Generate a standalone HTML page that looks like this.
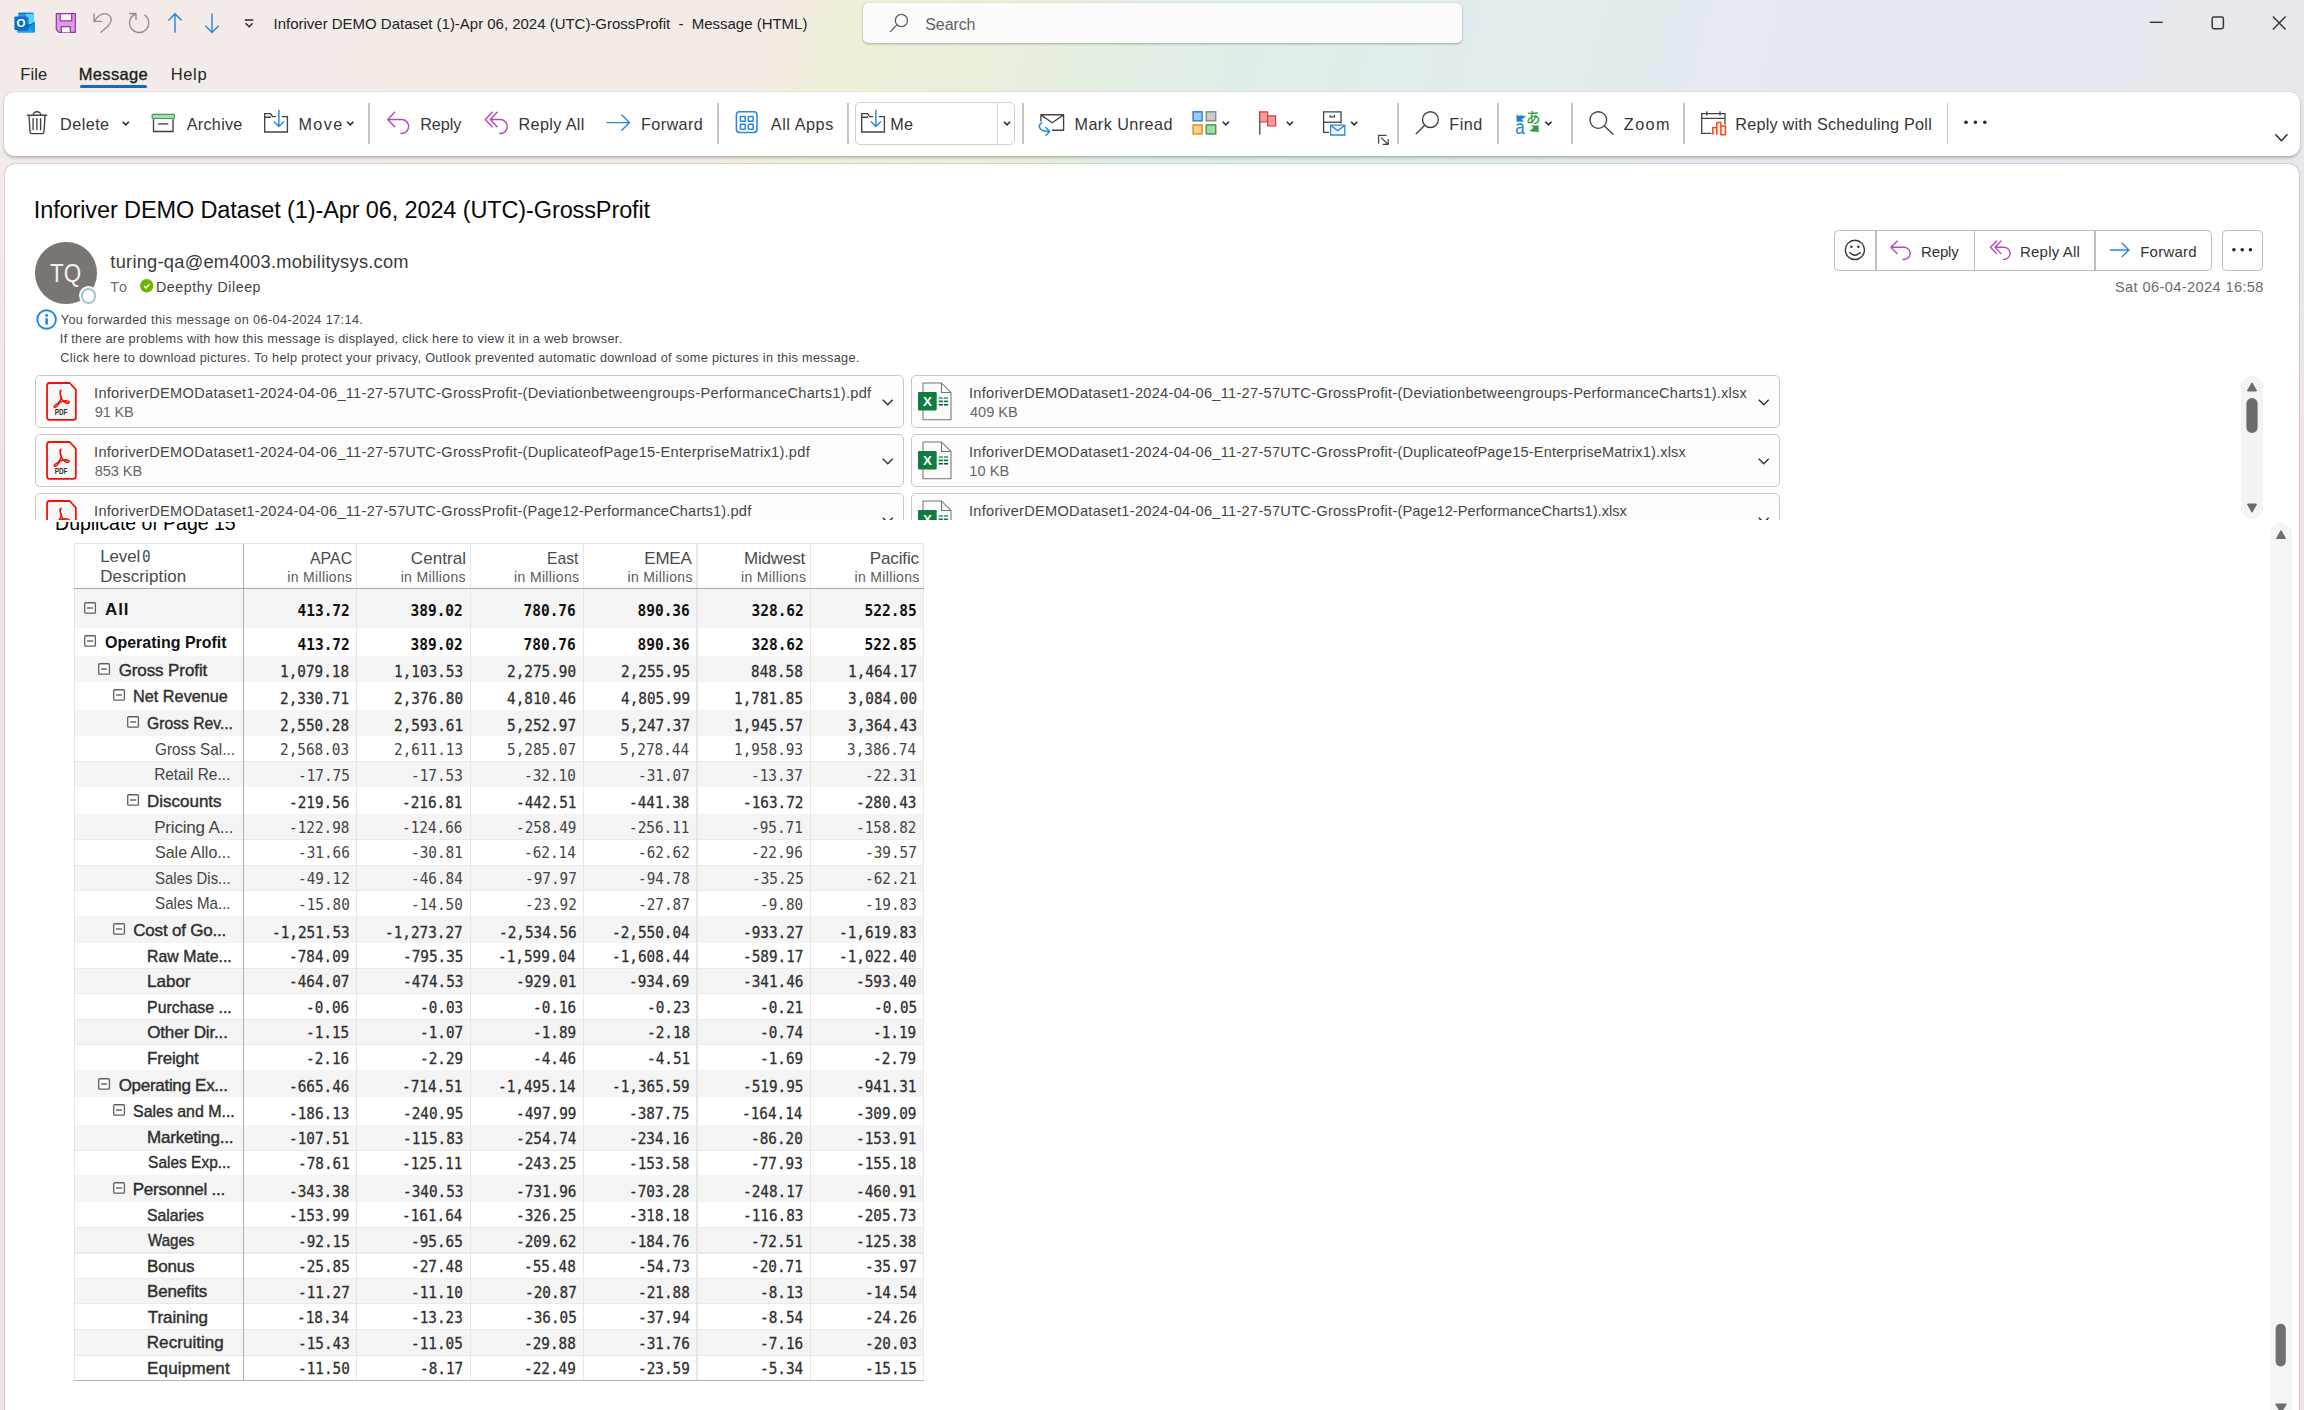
<!DOCTYPE html>
<html lang="en"><head><meta charset="utf-8"><title>Inforiver DEMO Dataset (1)-Apr 06, 2024 (UTC)-GrossProfit - Message (HTML)</title>
<style>
*{box-sizing:border-box;margin:0;padding:0}
html,body{width:2304px;height:1410px;overflow:hidden}
body{position:relative;font-family:"Liberation Sans",sans-serif;color:#242424;
background:linear-gradient(#f3ebe7 0,#f3ebe7 250px,#f0e4e9 450px);}
#topbg{left:0;top:0;width:2304px;height:175px;background:linear-gradient(105deg,#f3ebe7 0%,#f3ebe6 32.5%,#f1efd8 36.3%,#e8f0de 43.1%,#e0eee8 53.7%,#e2ecee 62.3%,#e5eaf0 77%,#e7e8ee 100%)}
div,svg,span.t{position:absolute}
span.t{white-space:nowrap;line-height:1}
svg{overflow:visible}
.sep{width:1.5px;background:#c8c8c8}
</style></head>
<body>
<div id="topbg"></div>
<svg style="left:0;top:0" width="270" height="46" viewBox="0 0 270 46"><path d="M18.2 13.6a0.8 0.8 0 0 1 .8-.8H33.1a0.8 0.8 0 0 1 .8.8V24H18.2Z" fill="#1e9be8"/><path d="M26 13H33.9V24H26Z" fill="#50d9ff"/><path d="M18.6 12.8H33.5V13.7H18.6Z" fill="#0b5cb0"/><path d="M17.2 24H34.9V31.9a0.8 0.8 0 0 1-.8.8H18a0.8 0.8 0 0 1-.8-.8Z" fill="#1ba4f0"/><path d="M34.9 22.2V32.4L27.6 26.4Z" fill="#1490df"/><path d="M34.9 22.2L27.4 26.4" stroke="#123b7a" stroke-width="0.7"/><path d="M26.8 17.5H28.8V29.5L26.8 31H17.5V29Z" fill="#0b4f8f" opacity=".55"/><rect x="14.4" y="16.4" width="12.8" height="13.7" rx="1.1" fill="#0a6cd0"/><text x="20.95" y="27.05" text-anchor="middle" font-family="Liberation Sans,sans-serif" font-weight="700" font-size="11.6" fill="#fff">O</text><path d="M56.3 13.7H75.3V32.3H59L56.3 29.6Z" fill="#da9fe2" stroke="#9a2eae" stroke-width="1.2" stroke-linejoin="round"/><path d="M60.2 13.7H71.7V20.8H60.2Z" fill="#fbfbfb" stroke="#9a2eae" stroke-width="1.2"/><path d="M61.3 32.3V26.6H70.3V32.3" fill="#fbfbfb" stroke="#9a2eae" stroke-width="1.2"/><g fill="none" stroke="#8f8c8a" stroke-width="1.35"><path d="M94 13.5V21.3H102.1M94.3 21C97.5 16.5 100.5 13.6 104.5 13.6C108.5 13.6 111.3 16.8 111.2 20C111.1 23 109.6 24.6 107.6 26.4L100.6 32.4"/><path d="M129.1 13.5H136V20.1M135.6 14A9.6 9.6 0 1 0 144.4 14.9"/></g><g fill="none" stroke="#2b88d8" stroke-width="1.45"><path d="M175 13.8V32.8M168.4 20.6L175 13.9L181.7 20.6"/><path d="M212 13.4V32.4M205.4 25.7L212 32.4L218.7 25.7"/></g><path d="M244.8 20H253.3M245.6 23.3L249.1 26.8L252.6 23.3" fill="none" stroke="#2b2b2b" stroke-width="1.4"/></svg>
<span class="t" style="top:16.00px;font-size:15px;left:273.62px;letter-spacing:-0.018px;white-space:pre;">Inforiver DEMO Dataset (1)-Apr 06, 2024 (UTC)-GrossProfit  -  Message (HTML)</span>
<div style="left:863px;top:3px;width:599px;height:40px;background:#fbfbfb;border-radius:5px;box-shadow:0 1px 2.5px rgba(0,0,0,.28),0 0 1px rgba(0,0,0,.18);"></div>
<svg style="left:888px;top:12px;" width="22" height="22" viewBox="0 0 22 22"><circle cx="13.400" cy="8.500" r="6.100" fill="none" stroke="#606060" stroke-width="1.35"/><path d="M9 12.900 L2.500 19.500" stroke="#606060" stroke-width="1.35" stroke-linecap="round"/></svg>
<span class="t" style="top:17.00px;font-size:16px;left:925.28px;letter-spacing:-0.089px;color:#616161;">Search</span>
<svg style="left:2140px;top:8px;" width="160" height="30" viewBox="0 0 160 30"><path d="M9.8 14.3h12.9" stroke="#333" stroke-width="1.4"/><rect x="72.2" y="9.1" width="11.2" height="11.7" rx="1.7" fill="none" stroke="#383838" stroke-width="1.5"/><path d="M132.9 8.6l12.7 12.9M145.6 8.6l-12.7 12.9" stroke="#333" stroke-width="1.4"/></svg>
<span class="t" style="top:66.00px;font-size:16.5px;left:20.15px;letter-spacing:0.166px;">File</span>
<span class="t" style="top:66.00px;font-size:16.5px;left:78.65px;letter-spacing:0.356px;color:#1b1b1b;-webkit-text-stroke:0.35px #1b1b1b;">Message</span>
<span class="t" style="top:66.00px;font-size:16.5px;left:170.65px;letter-spacing:0.696px;">Help</span>
<div style="left:80px;top:84.5px;width:67px;height:3px;background:#0f6cbd;border-radius:1.5px;"></div>
<div style="left:4px;top:92px;width:2296px;height:63.5px;background:#fff;border-radius:11px;box-shadow:0 1.5px 3px rgba(0,0,0,.22),0 0 1.5px rgba(0,0,0,.12);"></div>
<span class="t" style="top:116.00px;font-size:16.2px;left:60.07px;letter-spacing:0.445px;color:#363636;">Delete</span>
<span class="t" style="top:116.00px;font-size:16.2px;left:186.77px;letter-spacing:0.272px;color:#363636;">Archive</span>
<span class="t" style="top:116.00px;font-size:16.2px;left:298.47px;letter-spacing:1.411px;color:#363636;">Move</span>
<span class="t" style="top:116.00px;font-size:16.2px;left:420.27px;letter-spacing:-0.091px;color:#363636;">Reply</span>
<span class="t" style="top:116.00px;font-size:16.2px;left:518.47px;letter-spacing:0.372px;color:#363636;">Reply All</span>
<span class="t" style="top:116.00px;font-size:16.2px;left:640.97px;letter-spacing:0.393px;color:#363636;">Forward</span>
<span class="t" style="top:116.00px;font-size:16.2px;left:770.77px;letter-spacing:0.569px;color:#363636;">All Apps</span>
<span class="t" style="top:116.00px;font-size:16.2px;left:890.27px;letter-spacing:0.139px;color:#363636;">Me</span>
<span class="t" style="top:116.00px;font-size:16.2px;left:1074.47px;letter-spacing:0.443px;color:#363636;">Mark Unread</span>
<span class="t" style="top:116.00px;font-size:16.2px;left:1449.37px;letter-spacing:0.485px;color:#363636;">Find</span>
<span class="t" style="top:116.00px;font-size:16.2px;left:1623.80px;letter-spacing:1.449px;color:#363636;">Zoom</span>
<span class="t" style="top:116.00px;font-size:16.2px;left:1735.27px;letter-spacing:0.228px;color:#363636;">Reply with Scheduling Poll</span>
<div style="left:368.25px;top:103.2px;width:1.5px;height:40.6px;background:#c6c6c6;"></div>
<div style="left:717.45px;top:103.2px;width:1.5px;height:40.6px;background:#c6c6c6;"></div>
<div style="left:847.15px;top:103.2px;width:1.5px;height:40.6px;background:#c6c6c6;"></div>
<div style="left:1022.25px;top:103.2px;width:1.5px;height:40.6px;background:#c6c6c6;"></div>
<div style="left:1397.15px;top:103.2px;width:1.5px;height:40.6px;background:#c6c6c6;"></div>
<div style="left:1497.05px;top:103.2px;width:1.5px;height:40.6px;background:#c6c6c6;"></div>
<div style="left:1571.25px;top:103.2px;width:1.5px;height:40.6px;background:#c6c6c6;"></div>
<div style="left:1683.25px;top:103.2px;width:1.5px;height:40.6px;background:#c6c6c6;"></div>
<div style="left:1946.55px;top:103.2px;width:1.5px;height:40.6px;background:#c6c6c6;"></div>
<div style="left:855.3px;top:101.5px;width:159.7px;height:43px;border:1.2px solid #d1d1d1;border-radius:5px;"></div>
<div style="left:997px;top:102px;width:1.2px;height:42px;background:#d9d9d9;"></div>
<svg style="left:0;top:0" width="2304" height="160" viewBox="0 0 2304 160"><g fill="none" stroke="#424242" stroke-width="1.35" stroke-linecap="round" stroke-linejoin="round"><path d="M27.4 115.2H46.6M33.2 115 a3.8 3.3 0 0 1 7.6 0M29 115.4l1 16.3a2 2 0 0 0 2 1.9h10a2 2 0 0 0 2-1.9l1-16.3M33.1 118.6v11M36.9 118.6v11M40.6 118.6v11"/></g><path d="M122.65 121.77 l3.1 3.0 l3.1 -3.0" fill="none" stroke="#2b2b2b" stroke-width="1.6"/><rect x="152.1" y="114.4" width="22.4" height="4.2" rx="0.8" fill="#a9dcae" stroke="#3f9f52" stroke-width="1.2"/><path d="M153.5 119.2V131.5H173V119.2" fill="#fafafa" stroke="#424242" stroke-width="1.35"/><path d="M158.2 123.9H168.2" stroke="#424242" stroke-width="1.35"/><g transform="translate(0 0)" fill="none" stroke-width="1.35"><path d="M276 116.6H272.6L270.6 113.6H264.7V132H287.4V116.6H281.8M264.7 117.2H271" stroke="#424242"/><path d="M278.9 109.8V126.2M273.9 121.4l5 5 5-5" stroke="#2b88d8" stroke-width="1.45"/></g><path d="M347.15 121.77 l3.1 3.0 l3.1 -3.0" fill="none" stroke="#2b2b2b" stroke-width="1.6"/><g transform="translate(597 0)" fill="none" stroke-width="1.35"><path d="M276 116.6H272.6L270.6 113.6H264.7V132H287.4V116.6H281.8M264.7 117.2H271" stroke="#424242"/><path d="M278.9 109.8V126.2M273.9 121.4l5 5 5-5" stroke="#2b88d8" stroke-width="1.45"/></g><path d="M1003.95 121.77 l3.1 3.0 l3.1 -3.0" fill="none" stroke="#2b2b2b" stroke-width="1.6"/><path transform="translate(387 111.5) scale(1)" d="M7.6 0.7L0.8 8L7.6 15.3M1 8H15.2A7 7 0 0 1 14 22" fill="none" stroke="#b44ac0" stroke-width="1.45" stroke-linecap="round" stroke-linejoin="round"/><path transform="translate(484.5 111.5)" d="M7.6 0.7L0.8 8L7.6 15.3M12.6 0.7L5.8 8L12.6 15.3M6 8H16.3A7 7 0 0 1 15.2 22" fill="none" stroke="#b44ac0" stroke-width="1.45" stroke-linecap="round" stroke-linejoin="round"/><path d="M607 122.6H629.3M621.8 114.9l7.7 7.7-7.7 7.7" fill="none" stroke="#2b88d8" stroke-width="1.45" stroke-linecap="round" stroke-linejoin="round"/><g fill="none" stroke="#2b88d8" stroke-width="1.55"><rect x="736.4" y="111.8" width="20.6" height="20.6" rx="3.2"/><rect x="740.4" y="116.4" width="4.9" height="4.9" rx="0.6"/><rect x="748.3" y="116.4" width="4.9" height="4.9" rx="0.6"/><rect x="740.4" y="124.3" width="4.9" height="4.9" rx="0.6"/><rect x="748.3" y="124.3" width="4.9" height="4.9" rx="0.6"/></g><path d="M1040.9 121.5V114.7H1063.6V130.2H1052M1040.9 114.9L1052.2 122.7L1063.6 114.9" fill="none" stroke="#424242" stroke-width="1.35" stroke-linejoin="round"/><path d="M1041.8 122.6C1037.5 125.5 1038.5 131.6 1049.2 131.5M1045.8 127.6l3.9 3.9-3.9 3.9" fill="none" stroke="#2b88d8" stroke-width="1.45" stroke-linecap="round" stroke-linejoin="round"/><rect x="1193.1" y="111.8" width="9" height="9" fill="#a0cbf0" stroke="#2f7fd3" stroke-width="1.45"/><rect x="1206.3" y="111.8" width="9.400" height="9" fill="#cbcbcb" stroke="#8b8b8b" stroke-width="1.45"/><rect x="1193.1" y="124.9" width="9" height="9" fill="#fbd58e" stroke="#ea8a13" stroke-width="1.45"/><rect x="1206.3" y="124.9" width="9.400" height="9" fill="#a5daa8" stroke="#3a9c47" stroke-width="1.45"/><path d="M1222.75 121.77 l3.1 3.0 l3.1 -3.0" fill="none" stroke="#2b2b2b" stroke-width="1.6"/><path d="M1259.8 111.4V134.4" stroke="#424242" stroke-width="1.3"/><path d="M1259.8 111.9H1267.6V122H1259.8Z" fill="#f59da1" stroke="#d9383c" stroke-width="1.2"/><path d="M1267.6 115.9H1275.6V126H1267.6Z" fill="#f59da1" stroke="#d9383c" stroke-width="1.2"/><path d="M1286.75 121.77 l3.1 3.0 l3.1 -3.0" fill="none" stroke="#2b2b2b" stroke-width="1.6"/><path d="M1329 132.4H1323.6V111.9H1341V123.5" fill="none" stroke="#424242" stroke-width="1.3"/><path d="M1323.6 122.2H1341" stroke="#424242" stroke-width="1.3"/><path d="M1330 114.9v1.9h4.600v-1.9" fill="none" stroke="#424242" stroke-width="1.15"/><path d="M1330.6 125.2H1344.8V135H1330.6Z" fill="#f3f8fd" stroke="#2b88d8" stroke-width="1.3"/><path d="M1330.6 125.4L1337.7 130.6L1344.8 125.4" fill="none" stroke="#2b88d8" stroke-width="1.3"/><path d="M1351.05 121.77 l3.1 3.0 l3.1 -3.0" fill="none" stroke="#2b2b2b" stroke-width="1.6"/><path d="M1378.6 143.4V135.3H1386.6M1381 137.6L1388 144.3M1388.2 139V144.4H1382.8" fill="none" stroke="#424242" stroke-width="1.2"/><circle cx="1430.4" cy="119.6" r="7.9" fill="none" stroke="#424242" stroke-width="1.35"/><path d="M1424.7 125.3L1416.2 133.8" stroke="#424242" stroke-width="1.35" stroke-linecap="round"/><text x="1515.3" y="133.5" font-family="Liberation Sans,sans-serif" font-size="19.5" textLength="9.5" lengthAdjust="spacingAndGlyphs" fill="#1e86d0">a</text><text x="1526" y="123.3" font-family="Noto Sans CJK JP,IPAGothic,sans-serif" font-size="14.5" font-weight="500" fill="#37a04c">あ</text><path d="M1516.5 114.4L1518.6 115.7L1521 115.3L1526.2 116.2L1521.8 119.4L1524 121.7H1516.5Z" fill="#1e86d0"/><path d="M1538.6 132.7L1536.4 131.4L1534 131.8L1529.2 130.9L1533.4 127.7L1531.3 125.4H1538.6Z" fill="#2f9c44"/><path d="M1545.35 121.77 l3.1 3.0 l3.1 -3.0" fill="none" stroke="#2b2b2b" stroke-width="1.6"/><circle cx="1598.3" cy="120" r="8.3" fill="none" stroke="#424242" stroke-width="1.35"/><path d="M1604.3 126L1613 134.2" stroke="#424242" stroke-width="1.35" stroke-linecap="round"/><path d="M1711.4 133.4H1701.7V113.6H1725V124.6M1701.7 118.4H1725M1706.8 111.2V115.4M1720 111.2V115.4" fill="none" stroke="#424242" stroke-width="1.3"/><path d="M1712.8 134.8V127.6H1716.8V134.8M1716.8 134.8V122.6H1720.9V134.8M1720.9 134.8V126H1725.4V134.8Z" fill="#fdece6" stroke="#e8501d" stroke-width="1.5" stroke-linejoin="round"/><circle cx="1966" cy="122.2" r="1.75" fill="#222"/><circle cx="1975.4" cy="122.2" r="1.75" fill="#222"/><circle cx="1984.8" cy="122.2" r="1.75" fill="#222"/><path d="M2275.800 134.800l5.600 5.900 5.600-5.900" fill="none" stroke="#2a2a2a" stroke-width="1.5" stroke-linecap="round" stroke-linejoin="round"/></svg>
<div style="left:2285px;top:170px;width:19px;height:1240px;background:linear-gradient(#e7e7ee 0,#e7e7ee 90px,#efe4ea 250px);"></div>
<div style="left:4.5px;top:163.6px;width:2294.5px;height:1260px;background:#fff;border-radius:10.5px 10.5px 0 0;box-shadow:0 0 0 1px rgba(0,0,0,.11);"></div>
<span class="t" style="top:199.00px;font-size:23.5px;left:33.84px;letter-spacing:-0.118px;color:#0a0a0a;">Inforiver DEMO Dataset (1)-Apr 06, 2024 (UTC)-GrossProfit</span>
<div style="left:35px;top:242px;width:61.6px;height:61.6px;background:#7a7473;border-radius:50%;"></div>
<span class="t" style="top:261.00px;font-size:25px;left:50.05px;transform:scaleX(0.8976);transform-origin:0.55px 50%;color:#f4f2f2;">TQ</span>
<div style="left:79px;top:286px;width:19.4px;height:19.4px;background:#fff;border-radius:50%;"></div>
<div style="left:80.9px;top:288.1px;width:15.5px;height:15.5px;background:#fff;border:2px solid #a3c2d0;border-radius:50%;"></div>
<span class="t" style="top:253.00px;font-size:18.3px;left:110.33px;letter-spacing:0.239px;color:#3a3a3a;">turing-qa@em4003.mobilitysys.com</span>
<span class="t" style="top:280.00px;font-size:14.2px;left:110.29px;letter-spacing:1.599px;color:#6b6b6b;">To</span>
<svg style="left:139.6px;top:278.6px;" width="13.4" height="13.4" viewBox="0 0 13.4 13.4"><circle cx="6.7" cy="6.7" r="6.7" fill="#6bb700"/><path d="M4 6.9l2 2 3.5-3.7" fill="none" stroke="#fff" stroke-width="1.4"/></svg>
<span class="t" style="top:280.00px;font-size:14.2px;left:155.94px;letter-spacing:0.582px;color:#424242;">Deepthy Dileep</span>
<svg style="left:35.5px;top:308.5px;" width="22" height="22" viewBox="0 0 22 22"><circle cx="10.6" cy="10.5" r="9.3" fill="#fbfbfb" stroke="#1e88d6" stroke-width="1.9"/><circle cx="10.6" cy="6.5" r="1.45" fill="#1e88d6"/><path d="M10.6 9.2V15.6" stroke="#1e88d6" stroke-width="2.6"/></svg>
<span class="t" style="top:314.00px;font-size:12.7px;left:60.72px;letter-spacing:0.384px;color:#444;">You forwarded this message on 06-04-2024 17:14.</span>
<span class="t" style="top:333.00px;font-size:12.7px;left:59.83px;letter-spacing:0.297px;color:#444;">If there are problems with how this message is displayed, click here to view it in a web browser.</span>
<span class="t" style="top:352.00px;font-size:12.7px;left:60.37px;letter-spacing:0.324px;color:#444;">Click here to download pictures. To help protect your privacy, Outlook prevented automatic download of some pictures in this message.</span>
<div style="left:1834.4px;top:229.8px;width:377.3px;height:41.4px;border:1.5px solid #c2beba;border-radius:4.5px;"></div>
<div style="left:1875.05px;top:230px;width:1.5px;height:41px;background:#c2beba;"></div>
<div style="left:1973.65px;top:230px;width:1.5px;height:41px;background:#c2beba;"></div>
<div style="left:2094.35px;top:230px;width:1.5px;height:41px;background:#c2beba;"></div>
<div style="left:2222.4px;top:229.8px;width:40.5px;height:41.4px;border:1.5px solid #c2beba;border-radius:4.5px;"></div>
<svg style="left:0;top:0" width="2304" height="320" viewBox="0 0 2304 320"><circle cx="1854.9" cy="249.9" r="9.6" fill="none" stroke="#333" stroke-width="1.35"/><circle cx="1851.4" cy="246.8" r="1.25" fill="#333"/><circle cx="1858.4" cy="246.8" r="1.25" fill="#333"/><path d="M1849.6 252.6q5.3 5.2 10.6 0" fill="none" stroke="#333" stroke-width="1.35" stroke-linecap="round"/><path transform="translate(1890.2 240.3) scale(0.92 0.87)" d="M7.6 0.7L0.8 8L7.6 15.3M1 8H15.2A7 7 0 0 1 14 22" fill="none" stroke="#b44ac0" stroke-width="1.6" stroke-linecap="round" stroke-linejoin="round"/><path transform="translate(1989.8 240.3) scale(0.89 0.87)" d="M7.6 0.7L0.8 8L7.6 15.3M12.6 0.7L5.8 8L12.6 15.3M6 8H16.3A7 7 0 0 1 15.2 22" fill="none" stroke="#b44ac0" stroke-width="1.6" stroke-linecap="round" stroke-linejoin="round"/><path d="M2110.3 249.9H2128.8M2122.2 243.2l6.7 6.7-6.7 6.7" fill="none" stroke="#2b88d8" stroke-width="1.45" stroke-linecap="round" stroke-linejoin="round"/><circle cx="2233.9" cy="249.8" r="1.75" fill="#222"/><circle cx="2242.2" cy="249.8" r="1.75" fill="#222"/><circle cx="2250.4" cy="249.8" r="1.75" fill="#222"/></svg>
<span class="t" style="top:244.00px;font-size:15px;left:1920.97px;letter-spacing:-0.124px;color:#333;">Reply</span>
<span class="t" style="top:244.00px;font-size:15px;left:2020.07px;letter-spacing:0.184px;color:#333;">Reply All</span>
<span class="t" style="top:244.00px;font-size:15px;left:2140.17px;letter-spacing:0.247px;color:#333;">Forward</span>
<span class="t" style="top:280.00px;font-size:14.6px;left:2114.94px;letter-spacing:0.387px;color:#6b6b6b;">Sat 06-04-2024 16:58</span>
<div style="left:0;top:0;width:2304px;height:520.2px;overflow:hidden"><div style="left:35.1px;top:375.3px;width:868.6px;height:52.5px;border:1.2px solid #c8c8c8;border-radius:5px;background:#fdfdfd;"></div><div style="left:910.5px;top:375.3px;width:869px;height:52.5px;border:1.2px solid #c8c8c8;border-radius:5px;background:#fdfdfd;"></div><svg style="left:45.6px;top:382.0px;" width="31" height="39" viewBox="0 0 32 39" preserveAspectRatio="none"><path d="M3.2 1H24.3L30.6 7.6V35.2a2.6 2.6 0 0 1-2.6 2.6H3.2A2.6 2.6 0 0 1 .9 35.2V3.6A2.6 2.6 0 0 1 3.2 1Z" transform="translate(0.2 0)" fill="#f7f7f7" stroke="#f40f02" stroke-width="1.8" stroke-linejoin="round"/><path d="M15.6 8.2c-1.6.1-1.5 3.3.3 7.2c-1.300 3.500-3.400 6.300-5.500 7.200c-2.600 1.200-2.500 3 -.6 2.600c1.900-.5 3.300-2.600 4.700-5.200c2.200-.8 4.600-1.300 6.400-1.300c2.800.2 3.900 1.700 2.300 2.400c-1.700.7-4.300-.9-6.200-3.100c-1.800-2.200-2.700-4.600-2.200-7.800c.2-1.400.9-2.100.8-2Z" fill="none" stroke="#f40f02" stroke-width="1.5" stroke-linejoin="round"/><text x="15.6" y="33.3" text-anchor="middle" font-family="Liberation Sans,sans-serif" font-weight="700" font-size="8.2" textLength="13.2" lengthAdjust="spacingAndGlyphs" fill="#333">PDF</text></svg><svg style="left:918px;top:382.0px;" width="34" height="39" viewBox="0 0 34 39"><path d="M5 1H23.5L33 10.400V37.800H5Z" fill="#fafafa" stroke="#777573" stroke-width="1.05" stroke-linejoin="round"/><path d="M23.500 1V10.400H33" fill="none" stroke="#777573" stroke-width="1.05" stroke-linejoin="round"/><rect x="0" y="10" width="18.7" height="18.4" rx="0.8" fill="#107c41"/><text x="9.35" y="24.1" text-anchor="middle" font-family="Liberation Sans,sans-serif" font-weight="700" font-size="13.4" fill="#fff">X</text><path d="M20.700 16H24.900M25.900 16H30.100" stroke="#21a366" stroke-width="1.6"/><path d="M20.700 19.400H24.900M25.900 19.400H30.100" stroke="#107c41" stroke-width="1.6"/><path d="M20.700 22.700H24.900M25.900 22.700H30.100" stroke="#0a4f2a" stroke-width="1.6"/></svg><span class="t" style="top:386px;left:94.06px;font-size:14.6px;color:#454545;"><span style="letter-spacing:0.279px">InforiverDEMODataset1-2024-04-06_11-27-57UTC-GrossProfit-</span><span style="letter-spacing:0.314px">(Deviationbetweengroups-PerformanceCharts1).pdf</span></span><span class="t" style="top:405.00px;font-size:14.6px;left:94.73px;letter-spacing:-0.185px;color:#666;">91 KB</span><span class="t" style="top:386px;left:968.96px;font-size:14.6px;color:#454545;"><span style="letter-spacing:0.281px">InforiverDEMODataset1-2024-04-06_11-27-57UTC-GrossProfit-</span><span style="letter-spacing:0.218px">(Deviationbetweengroups-PerformanceCharts1).xlsx</span></span><span class="t" style="top:405.00px;font-size:14.6px;left:969.98px;letter-spacing:-0.022px;color:#666;">409 KB</span><svg style="left:882.2px;top:399.3px;" width="12" height="7" viewBox="0 0 12 7"><path d="M0.8 0.800L5.750 5.700L10.700 0.800" fill="none" stroke="#333" stroke-width="1.5"/></svg><svg style="left:1757.8px;top:399.3px;" width="12" height="7" viewBox="0 0 12 7"><path d="M0.8 0.800L5.750 5.700L10.700 0.800" fill="none" stroke="#333" stroke-width="1.5"/></svg><div style="left:35.1px;top:434.2px;width:868.6px;height:52.5px;border:1.2px solid #c8c8c8;border-radius:5px;background:#fdfdfd;"></div><div style="left:910.5px;top:434.2px;width:869px;height:52.5px;border:1.2px solid #c8c8c8;border-radius:5px;background:#fdfdfd;"></div><svg style="left:45.6px;top:440.9px;" width="31" height="39" viewBox="0 0 32 39" preserveAspectRatio="none"><path d="M3.2 1H24.3L30.6 7.6V35.2a2.6 2.6 0 0 1-2.6 2.6H3.2A2.6 2.6 0 0 1 .9 35.2V3.6A2.6 2.6 0 0 1 3.2 1Z" transform="translate(0.2 0)" fill="#f7f7f7" stroke="#f40f02" stroke-width="1.8" stroke-linejoin="round"/><path d="M15.6 8.2c-1.6.1-1.5 3.3.3 7.2c-1.300 3.500-3.400 6.300-5.500 7.200c-2.600 1.200-2.500 3 -.6 2.600c1.900-.5 3.300-2.600 4.700-5.200c2.200-.8 4.600-1.300 6.400-1.300c2.800.2 3.900 1.700 2.300 2.400c-1.700.7-4.300-.9-6.200-3.100c-1.800-2.200-2.700-4.600-2.200-7.800c.2-1.400.9-2.100.8-2Z" fill="none" stroke="#f40f02" stroke-width="1.5" stroke-linejoin="round"/><text x="15.6" y="33.3" text-anchor="middle" font-family="Liberation Sans,sans-serif" font-weight="700" font-size="8.2" textLength="13.2" lengthAdjust="spacingAndGlyphs" fill="#333">PDF</text></svg><svg style="left:918px;top:440.9px;" width="34" height="39" viewBox="0 0 34 39"><path d="M5 1H23.5L33 10.400V37.800H5Z" fill="#fafafa" stroke="#777573" stroke-width="1.05" stroke-linejoin="round"/><path d="M23.500 1V10.400H33" fill="none" stroke="#777573" stroke-width="1.05" stroke-linejoin="round"/><rect x="0" y="10" width="18.7" height="18.4" rx="0.8" fill="#107c41"/><text x="9.35" y="24.1" text-anchor="middle" font-family="Liberation Sans,sans-serif" font-weight="700" font-size="13.4" fill="#fff">X</text><path d="M20.700 16H24.900M25.900 16H30.100" stroke="#21a366" stroke-width="1.6"/><path d="M20.700 19.400H24.900M25.900 19.400H30.100" stroke="#107c41" stroke-width="1.6"/><path d="M20.700 22.700H24.900M25.900 22.700H30.100" stroke="#0a4f2a" stroke-width="1.6"/></svg><span class="t" style="top:445px;left:94.06px;font-size:14.6px;color:#454545;"><span style="letter-spacing:0.279px">InforiverDEMODataset1-2024-04-06_11-27-57UTC-GrossProfit-</span><span style="letter-spacing:0.264px">(DuplicateofPage15-EnterpriseMatrix1).pdf</span></span><span class="t" style="top:464.00px;font-size:14.6px;left:94.77px;letter-spacing:-0.080px;color:#666;">853 KB</span><span class="t" style="top:445px;left:968.96px;font-size:14.6px;color:#454545;"><span style="letter-spacing:0.281px">InforiverDEMODataset1-2024-04-06_11-27-57UTC-GrossProfit-</span><span style="letter-spacing:0.168px">(DuplicateofPage15-EnterpriseMatrix1).xlsx</span></span><span class="t" style="top:464.00px;font-size:14.6px;left:969.19px;letter-spacing:0.075px;color:#666;">10 KB</span><svg style="left:882.2px;top:458.2px;" width="12" height="7" viewBox="0 0 12 7"><path d="M0.8 0.800L5.750 5.700L10.700 0.800" fill="none" stroke="#333" stroke-width="1.5"/></svg><svg style="left:1757.8px;top:458.2px;" width="12" height="7" viewBox="0 0 12 7"><path d="M0.8 0.800L5.750 5.700L10.700 0.800" fill="none" stroke="#333" stroke-width="1.5"/></svg><div style="left:35.1px;top:493.1px;width:868.6px;height:52.5px;border:1.2px solid #c8c8c8;border-radius:5px;background:#fdfdfd;"></div><div style="left:910.5px;top:493.1px;width:869px;height:52.5px;border:1.2px solid #c8c8c8;border-radius:5px;background:#fdfdfd;"></div><svg style="left:45.6px;top:499.8px;" width="31" height="39" viewBox="0 0 32 39" preserveAspectRatio="none"><path d="M3.2 1H24.3L30.6 7.6V35.2a2.6 2.6 0 0 1-2.6 2.6H3.2A2.6 2.6 0 0 1 .9 35.2V3.6A2.6 2.6 0 0 1 3.2 1Z" transform="translate(0.2 0)" fill="#f7f7f7" stroke="#f40f02" stroke-width="1.8" stroke-linejoin="round"/><path d="M15.6 8.2c-1.6.1-1.5 3.3.3 7.2c-1.300 3.500-3.400 6.300-5.500 7.200c-2.600 1.200-2.500 3 -.6 2.600c1.900-.5 3.300-2.600 4.700-5.200c2.200-.8 4.600-1.300 6.400-1.300c2.800.2 3.900 1.700 2.300 2.400c-1.700.7-4.300-.9-6.200-3.100c-1.800-2.200-2.700-4.600-2.200-7.800c.2-1.400.9-2.100.8-2Z" fill="none" stroke="#f40f02" stroke-width="1.5" stroke-linejoin="round"/><text x="15.6" y="33.3" text-anchor="middle" font-family="Liberation Sans,sans-serif" font-weight="700" font-size="8.2" textLength="13.2" lengthAdjust="spacingAndGlyphs" fill="#333">PDF</text></svg><svg style="left:918px;top:499.8px;" width="34" height="39" viewBox="0 0 34 39"><path d="M5 1H23.5L33 10.400V37.800H5Z" fill="#fafafa" stroke="#777573" stroke-width="1.05" stroke-linejoin="round"/><path d="M23.500 1V10.400H33" fill="none" stroke="#777573" stroke-width="1.05" stroke-linejoin="round"/><rect x="0" y="10" width="18.7" height="18.4" rx="0.8" fill="#107c41"/><text x="9.35" y="24.1" text-anchor="middle" font-family="Liberation Sans,sans-serif" font-weight="700" font-size="13.4" fill="#fff">X</text><path d="M20.700 16H24.900M25.900 16H30.100" stroke="#21a366" stroke-width="1.6"/><path d="M20.700 19.400H24.900M25.900 19.400H30.100" stroke="#107c41" stroke-width="1.6"/><path d="M20.700 22.700H24.900M25.900 22.700H30.100" stroke="#0a4f2a" stroke-width="1.6"/></svg><span class="t" style="top:504px;left:94.06px;font-size:14.6px;color:#454545;"><span style="letter-spacing:0.279px">InforiverDEMODataset1-2024-04-06_11-27-57UTC-GrossProfit-</span><span style="letter-spacing:0.160px">(Page12-PerformanceCharts1).pdf</span></span><span class="t" style="top:504px;left:968.96px;font-size:14.6px;color:#454545;"><span style="letter-spacing:0.281px">InforiverDEMODataset1-2024-04-06_11-27-57UTC-GrossProfit-</span><span style="letter-spacing:0.020px">(Page12-PerformanceCharts1).xlsx</span></span><svg style="left:882.2px;top:517.1px;" width="12" height="7" viewBox="0 0 12 7"><path d="M0.8 0.800L5.750 5.700L10.700 0.800" fill="none" stroke="#333" stroke-width="1.5"/></svg><svg style="left:1757.8px;top:517.1px;" width="12" height="7" viewBox="0 0 12 7"><path d="M0.8 0.800L5.750 5.700L10.700 0.800" fill="none" stroke="#333" stroke-width="1.5"/></svg></div>
<div style="left:2241px;top:376px;width:22px;height:143px;background:#f3f3f3;border-radius:11px;"></div>
<svg style="left:2241px;top:376px;" width="22" height="143" viewBox="0 0 22 143"><path d="M6.200 14.200L10.500 6.800a0.600 0.600 0 0 1 1 0L15.800 14.200a0.800 0.800 0 0 1-.7 1.200H6.900a0.800 0.800 0 0 1-.7-1.200Z" fill="#6b6b6b"/><rect x="5.400" y="22" width="11.200" height="35" rx="5.600" fill="#6b6b6b"/><path d="M6.200 128.800L10.500 136.200a0.600 0.600 0 0 0 1 0L15.800 128.800a0.800 0.800 0 0 0-.7-1.200H6.900a0.800 0.800 0 0 0-.7 1.200Z" fill="#6b6b6b"/></svg>
<div style="left:0;top:522px;width:2304px;height:888px;overflow:hidden"><div style="left:0;top:-522px;width:2304px;height:1410px"><span class="t" style="top:514.00px;font-size:19.5px;left:55.10px;letter-spacing:-0.028px;color:#000;">Duplicate of Page 15</span>
<div style="left:74.8px;top:589.4px;width:848.6px;height:39.0px;background:#f4f4f4;"></div>
<div style="left:74.8px;top:655.9px;width:848.6px;height:26.5px;background:#f4f4f4;"></div>
<div style="left:74.8px;top:709.6px;width:848.6px;height:26.7px;background:#f4f4f4;"></div>
<div style="left:74.8px;top:761.3px;width:848.6px;height:25.9px;background:#f4f4f4;"></div>
<div style="left:74.8px;top:814.3px;width:848.6px;height:25.3px;background:#f4f4f4;"></div>
<div style="left:74.8px;top:865.1px;width:848.6px;height:25.5px;background:#f4f4f4;"></div>
<div style="left:74.8px;top:916.1px;width:848.6px;height:26.5px;background:#f4f4f4;"></div>
<div style="left:74.8px;top:968.1px;width:848.6px;height:25.5px;background:#f4f4f4;"></div>
<div style="left:74.8px;top:1019.1px;width:848.6px;height:25.5px;background:#f4f4f4;"></div>
<div style="left:74.8px;top:1070.3px;width:848.6px;height:27.1px;background:#f4f4f4;"></div>
<div style="left:74.8px;top:1124.6px;width:848.6px;height:25.5px;background:#f4f4f4;"></div>
<div style="left:74.8px;top:1175.4px;width:848.6px;height:26.8px;background:#f4f4f4;"></div>
<div style="left:74.8px;top:1227.5px;width:848.6px;height:25.5px;background:#f4f4f4;"></div>
<div style="left:74.8px;top:1278.4px;width:848.6px;height:25.5px;background:#f4f4f4;"></div>
<div style="left:74.8px;top:1329.6px;width:848.6px;height:25.6px;background:#f4f4f4;"></div>
<div style="left:74.8px;top:760.6999999999999px;width:848.6px;height:1.2px;background:#e9e9e9;"></div>
<div style="left:74.8px;top:839.0px;width:848.6px;height:1.2px;background:#e9e9e9;"></div>
<div style="left:74.8px;top:864.5px;width:848.6px;height:1.2px;background:#e9e9e9;"></div>
<div style="left:74.8px;top:890.0px;width:848.6px;height:1.2px;background:#e9e9e9;"></div>
<div style="left:74.8px;top:967.5px;width:848.6px;height:1.2px;background:#e9e9e9;"></div>
<div style="left:74.8px;top:993.0px;width:848.6px;height:1.2px;background:#e9e9e9;"></div>
<div style="left:74.8px;top:1018.5px;width:848.6px;height:1.2px;background:#e9e9e9;"></div>
<div style="left:74.8px;top:1044.0px;width:848.6px;height:1.2px;background:#e9e9e9;"></div>
<div style="left:74.8px;top:1149.5px;width:848.6px;height:1.2px;background:#e9e9e9;"></div>
<div style="left:74.8px;top:1226.9px;width:848.6px;height:1.2px;background:#e9e9e9;"></div>
<div style="left:74.8px;top:1252.4px;width:848.6px;height:1.2px;background:#e9e9e9;"></div>
<div style="left:74.8px;top:1277.8000000000002px;width:848.6px;height:1.2px;background:#e9e9e9;"></div>
<div style="left:74.8px;top:1303.3000000000002px;width:848.6px;height:1.2px;background:#e9e9e9;"></div>
<div style="left:74.8px;top:1329.0px;width:848.6px;height:1.2px;background:#e9e9e9;"></div>
<div style="left:74.8px;top:1354.6000000000001px;width:848.6px;height:1.2px;background:#e9e9e9;"></div>
<div style="left:74.2px;top:543px;width:849.6px;height:1.3px;background:#e4e4e4;"></div>
<div style="left:74.2px;top:543px;width:1.3px;height:837.4000000000001px;background:#e4e4e4;"></div>
<div style="left:922.6px;top:543px;width:1.3px;height:837.4000000000001px;background:#e8e8e8;"></div>
<div style="left:356.05px;top:543.5px;width:1.4px;height:836.9000000000001px;background:#e6e6e6;"></div>
<div style="left:469.50000000000006px;top:543.5px;width:1.4px;height:836.9000000000001px;background:#e6e6e6;"></div>
<div style="left:582.95px;top:543.5px;width:1.4px;height:836.9000000000001px;background:#e6e6e6;"></div>
<div style="left:696.4px;top:543.5px;width:1.4px;height:836.9000000000001px;background:#e6e6e6;"></div>
<div style="left:809.8499999999999px;top:543.5px;width:1.4px;height:836.9000000000001px;background:#e6e6e6;"></div>
<div style="left:242.5px;top:543.5px;width:1.7px;height:836.9000000000001px;background:#b2b2b2;"></div>
<div style="left:74.2px;top:587.6px;width:849.7px;height:1.7px;background:#a9a9a9;"></div>
<div style="left:74.2px;top:1379.6000000000001px;width:849.7px;height:1.7px;background:#b4b4b4;"></div>
<span class="t" style="top:548.00px;font-size:17px;left:100.21px;letter-spacing:-0.129px;color:#4a4a4a;">Level</span>
<span class="t" style="top:549.00px;font-size:16px;left:142.28px;color:#4a4a4a;font-family:'DejaVu Sans Mono',monospace;transform:scaleX(.895);transform-origin:0 50%;">0</span>
<span class="t" style="top:568.00px;font-size:17px;left:100.21px;letter-spacing:0.105px;color:#4a4a4a;">Description</span>
<span class="t" style="top:550.00px;font-size:17px;left:309.87px;transform:scaleX(0.9353);transform-origin:0.03px 50%;color:#4a4a4a;">APAC</span>
<span class="t" style="top:570.00px;font-size:14px;left:287.18px;letter-spacing:0.347px;color:#5a5a5a;">in Millions</span>
<span class="t" style="top:550.00px;font-size:17px;left:410.85px;letter-spacing:0.055px;color:#4a4a4a;">Central</span>
<span class="t" style="top:570.00px;font-size:14px;left:400.63px;letter-spacing:0.347px;color:#5a5a5a;">in Millions</span>
<span class="t" style="top:550.00px;font-size:17px;left:547.01px;transform:scaleX(0.9199);transform-origin:1.39px 50%;color:#4a4a4a;">East</span>
<span class="t" style="top:570.00px;font-size:14px;left:514.08px;letter-spacing:0.347px;color:#5a5a5a;">in Millions</span>
<span class="t" style="top:550.00px;font-size:17px;left:644.31px;letter-spacing:-0.234px;color:#4a4a4a;">EMEA</span>
<span class="t" style="top:570.00px;font-size:14px;left:627.53px;letter-spacing:0.347px;color:#5a5a5a;">in Millions</span>
<span class="t" style="top:550.00px;font-size:17px;left:743.88px;letter-spacing:-0.152px;color:#4a4a4a;">Midwest</span>
<span class="t" style="top:570.00px;font-size:14px;left:740.98px;letter-spacing:0.347px;color:#5a5a5a;">in Millions</span>
<span class="t" style="top:550.00px;font-size:17px;left:869.75px;letter-spacing:-0.121px;color:#4a4a4a;">Pacific</span>
<span class="t" style="top:570.00px;font-size:14px;left:854.43px;letter-spacing:0.347px;color:#5a5a5a;">in Millions</span>
<span class="t" style="top:601.00px;font-size:17px;left:105.09px;letter-spacing:0.886px;color:#111;font-weight:700;">All</span>
<svg style="left:84.1px;top:602.4px;" width="13" height="13" viewBox="0 0 13 13"><rect x="0.7" y="0.75" width="10.7" height="10.4" rx="0.9" fill="#fff" stroke="#606060" stroke-width="1.3"/><path d="M3 6H9.1" stroke="#606060" stroke-width="1.4"/></svg>
<span class="t" style="top:603px;right:1954.41px;font-size:16px;font-family:'DejaVu Sans Mono',monospace;transform:scaleX(0.905);transform-origin:100% 50%;color:#111;font-weight:700;">413.72</span>
<span class="t" style="top:603px;right:1840.96px;font-size:16px;font-family:'DejaVu Sans Mono',monospace;transform:scaleX(0.905);transform-origin:100% 50%;color:#111;font-weight:700;">389.02</span>
<span class="t" style="top:603px;right:1727.91px;font-size:16px;font-family:'DejaVu Sans Mono',monospace;transform:scaleX(0.905);transform-origin:100% 50%;color:#111;font-weight:700;">780.76</span>
<span class="t" style="top:603px;right:1614.46px;font-size:16px;font-family:'DejaVu Sans Mono',monospace;transform:scaleX(0.905);transform-origin:100% 50%;color:#111;font-weight:700;">890.36</span>
<span class="t" style="top:603px;right:1500.61px;font-size:16px;font-family:'DejaVu Sans Mono',monospace;transform:scaleX(0.905);transform-origin:100% 50%;color:#111;font-weight:700;">328.62</span>
<span class="t" style="top:603px;right:1387.38px;font-size:16px;font-family:'DejaVu Sans Mono',monospace;transform:scaleX(0.905);transform-origin:100% 50%;color:#111;font-weight:700;">522.85</span>
<span class="t" style="top:634.00px;font-size:17px;left:104.50px;transform:scaleX(0.9394);transform-origin:0.70px 50%;color:#111;font-weight:700;">Operating Profit</span>
<svg style="left:84.1px;top:635.4px;" width="13" height="13" viewBox="0 0 13 13"><rect x="0.7" y="0.75" width="10.7" height="10.4" rx="0.9" fill="#fff" stroke="#606060" stroke-width="1.3"/><path d="M3 6H9.1" stroke="#606060" stroke-width="1.4"/></svg>
<span class="t" style="top:637px;right:1954.41px;font-size:16px;font-family:'DejaVu Sans Mono',monospace;transform:scaleX(0.905);transform-origin:100% 50%;color:#111;font-weight:700;">413.72</span>
<span class="t" style="top:637px;right:1840.96px;font-size:16px;font-family:'DejaVu Sans Mono',monospace;transform:scaleX(0.905);transform-origin:100% 50%;color:#111;font-weight:700;">389.02</span>
<span class="t" style="top:637px;right:1727.91px;font-size:16px;font-family:'DejaVu Sans Mono',monospace;transform:scaleX(0.905);transform-origin:100% 50%;color:#111;font-weight:700;">780.76</span>
<span class="t" style="top:637px;right:1614.46px;font-size:16px;font-family:'DejaVu Sans Mono',monospace;transform:scaleX(0.905);transform-origin:100% 50%;color:#111;font-weight:700;">890.36</span>
<span class="t" style="top:637px;right:1500.61px;font-size:16px;font-family:'DejaVu Sans Mono',monospace;transform:scaleX(0.905);transform-origin:100% 50%;color:#111;font-weight:700;">328.62</span>
<span class="t" style="top:637px;right:1387.38px;font-size:16px;font-family:'DejaVu Sans Mono',monospace;transform:scaleX(0.905);transform-origin:100% 50%;color:#111;font-weight:700;">522.85</span>
<span class="t" style="top:662.00px;font-size:17px;left:118.65px;letter-spacing:-0.098px;color:#2e2e2e;-webkit-text-stroke:0.4px #2e2e2e;">Gross Profit</span>
<svg style="left:98.1px;top:663.4px;" width="13" height="13" viewBox="0 0 13 13"><rect x="0.7" y="0.75" width="10.7" height="10.4" rx="0.9" fill="#fff" stroke="#606060" stroke-width="1.3"/><path d="M3 6H9.1" stroke="#606060" stroke-width="1.4"/></svg>
<span class="t" style="top:664px;right:1954.69px;font-size:16px;font-family:'DejaVu Sans Mono',monospace;transform:scaleX(0.895);transform-origin:100% 50%;color:#2e2e2e;-webkit-text-stroke:0.28px #2e2e2e;">1,079.18</span>
<span class="t" style="top:664px;right:1841.07px;font-size:16px;font-family:'DejaVu Sans Mono',monospace;transform:scaleX(0.895);transform-origin:100% 50%;color:#2e2e2e;-webkit-text-stroke:0.28px #2e2e2e;">1,103.53</span>
<span class="t" style="top:664px;right:1727.78px;font-size:16px;font-family:'DejaVu Sans Mono',monospace;transform:scaleX(0.895);transform-origin:100% 50%;color:#2e2e2e;-webkit-text-stroke:0.28px #2e2e2e;">2,275.90</span>
<span class="t" style="top:664px;right:1614.10px;font-size:16px;font-family:'DejaVu Sans Mono',monospace;transform:scaleX(0.895);transform-origin:100% 50%;color:#2e2e2e;-webkit-text-stroke:0.28px #2e2e2e;">2,255.95</span>
<span class="t" style="top:664px;right:1500.89px;font-size:16px;font-family:'DejaVu Sans Mono',monospace;transform:scaleX(0.895);transform-origin:100% 50%;color:#2e2e2e;-webkit-text-stroke:0.28px #2e2e2e;">848.58</span>
<span class="t" style="top:664px;right:1387.27px;font-size:16px;font-family:'DejaVu Sans Mono',monospace;transform:scaleX(0.895);transform-origin:100% 50%;color:#2e2e2e;-webkit-text-stroke:0.28px #2e2e2e;">1,464.17</span>
<span class="t" style="top:688.00px;font-size:17px;left:132.71px;transform:scaleX(0.9558);transform-origin:1.39px 50%;color:#2e2e2e;-webkit-text-stroke:0.4px #2e2e2e;">Net Revenue</span>
<svg style="left:112.5px;top:689.4px;" width="13" height="13" viewBox="0 0 13 13"><rect x="0.7" y="0.75" width="10.7" height="10.4" rx="0.9" fill="#fff" stroke="#606060" stroke-width="1.3"/><path d="M3 6H9.1" stroke="#606060" stroke-width="1.4"/></svg>
<span class="t" style="top:691px;right:1954.64px;font-size:16px;font-family:'DejaVu Sans Mono',monospace;transform:scaleX(0.895);transform-origin:100% 50%;color:#2e2e2e;-webkit-text-stroke:0.28px #2e2e2e;">2,330.71</span>
<span class="t" style="top:691px;right:1841.23px;font-size:16px;font-family:'DejaVu Sans Mono',monospace;transform:scaleX(0.895);transform-origin:100% 50%;color:#2e2e2e;-webkit-text-stroke:0.28px #2e2e2e;">2,376.80</span>
<span class="t" style="top:691px;right:1727.78px;font-size:16px;font-family:'DejaVu Sans Mono',monospace;transform:scaleX(0.895);transform-origin:100% 50%;color:#2e2e2e;-webkit-text-stroke:0.28px #2e2e2e;">4,810.46</span>
<span class="t" style="top:691px;right:1614.29px;font-size:16px;font-family:'DejaVu Sans Mono',monospace;transform:scaleX(0.895);transform-origin:100% 50%;color:#2e2e2e;-webkit-text-stroke:0.28px #2e2e2e;">4,805.99</span>
<span class="t" style="top:691px;right:1500.65px;font-size:16px;font-family:'DejaVu Sans Mono',monospace;transform:scaleX(0.895);transform-origin:100% 50%;color:#2e2e2e;-webkit-text-stroke:0.28px #2e2e2e;">1,781.85</span>
<span class="t" style="top:691px;right:1387.43px;font-size:16px;font-family:'DejaVu Sans Mono',monospace;transform:scaleX(0.895);transform-origin:100% 50%;color:#2e2e2e;-webkit-text-stroke:0.28px #2e2e2e;">3,084.00</span>
<span class="t" style="top:715.00px;font-size:17px;left:147.35px;transform:scaleX(0.9217);transform-origin:0.85px 50%;color:#2e2e2e;-webkit-text-stroke:0.4px #2e2e2e;">Gross Rev...</span>
<svg style="left:126.5px;top:716.4px;" width="13" height="13" viewBox="0 0 13 13"><rect x="0.7" y="0.75" width="10.7" height="10.4" rx="0.9" fill="#fff" stroke="#606060" stroke-width="1.3"/><path d="M3 6H9.1" stroke="#606060" stroke-width="1.4"/></svg>
<span class="t" style="top:718px;right:1954.69px;font-size:16px;font-family:'DejaVu Sans Mono',monospace;transform:scaleX(0.895);transform-origin:100% 50%;color:#2e2e2e;-webkit-text-stroke:0.28px #2e2e2e;">2,550.28</span>
<span class="t" style="top:718px;right:1841.19px;font-size:16px;font-family:'DejaVu Sans Mono',monospace;transform:scaleX(0.895);transform-origin:100% 50%;color:#2e2e2e;-webkit-text-stroke:0.28px #2e2e2e;">2,593.61</span>
<span class="t" style="top:718px;right:1727.62px;font-size:16px;font-family:'DejaVu Sans Mono',monospace;transform:scaleX(0.895);transform-origin:100% 50%;color:#2e2e2e;-webkit-text-stroke:0.28px #2e2e2e;">5,252.97</span>
<span class="t" style="top:718px;right:1614.17px;font-size:16px;font-family:'DejaVu Sans Mono',monospace;transform:scaleX(0.895);transform-origin:100% 50%;color:#2e2e2e;-webkit-text-stroke:0.28px #2e2e2e;">5,247.37</span>
<span class="t" style="top:718px;right:1500.72px;font-size:16px;font-family:'DejaVu Sans Mono',monospace;transform:scaleX(0.895);transform-origin:100% 50%;color:#2e2e2e;-webkit-text-stroke:0.28px #2e2e2e;">1,945.57</span>
<span class="t" style="top:718px;right:1387.27px;font-size:16px;font-family:'DejaVu Sans Mono',monospace;transform:scaleX(0.895);transform-origin:100% 50%;color:#2e2e2e;-webkit-text-stroke:0.28px #2e2e2e;">3,364.43</span>
<span class="t" style="top:741.00px;font-size:17px;left:154.75px;transform:scaleX(0.8992);transform-origin:0.85px 50%;color:#444;">Gross Sal...</span>
<span class="t" style="top:742px;right:1954.52px;font-size:16px;font-family:'DejaVu Sans Mono',monospace;transform:scaleX(0.895);transform-origin:100% 50%;color:#444;">2,568.03</span>
<span class="t" style="top:742px;right:1841.07px;font-size:16px;font-family:'DejaVu Sans Mono',monospace;transform:scaleX(0.895);transform-origin:100% 50%;color:#444;">2,611.13</span>
<span class="t" style="top:742px;right:1727.62px;font-size:16px;font-family:'DejaVu Sans Mono',monospace;transform:scaleX(0.895);transform-origin:100% 50%;color:#444;">5,285.07</span>
<span class="t" style="top:742px;right:1614.57px;font-size:16px;font-family:'DejaVu Sans Mono',monospace;transform:scaleX(0.895);transform-origin:100% 50%;color:#444;">5,278.44</span>
<span class="t" style="top:742px;right:1500.72px;font-size:16px;font-family:'DejaVu Sans Mono',monospace;transform:scaleX(0.895);transform-origin:100% 50%;color:#444;">1,958.93</span>
<span class="t" style="top:742px;right:1387.67px;font-size:16px;font-family:'DejaVu Sans Mono',monospace;transform:scaleX(0.895);transform-origin:100% 50%;color:#444;">3,386.74</span>
<span class="t" style="top:766.00px;font-size:17px;left:154.21px;transform:scaleX(0.9046);transform-origin:1.39px 50%;color:#444;">Retail Re...</span>
<span class="t" style="top:768px;right:1954.45px;font-size:16px;font-family:'DejaVu Sans Mono',monospace;transform:scaleX(0.895);transform-origin:100% 50%;color:#444;">-17.75</span>
<span class="t" style="top:768px;right:1841.07px;font-size:16px;font-family:'DejaVu Sans Mono',monospace;transform:scaleX(0.895);transform-origin:100% 50%;color:#444;">-17.53</span>
<span class="t" style="top:768px;right:1727.78px;font-size:16px;font-family:'DejaVu Sans Mono',monospace;transform:scaleX(0.895);transform-origin:100% 50%;color:#444;">-32.10</span>
<span class="t" style="top:768px;right:1614.17px;font-size:16px;font-family:'DejaVu Sans Mono',monospace;transform:scaleX(0.895);transform-origin:100% 50%;color:#444;">-31.07</span>
<span class="t" style="top:768px;right:1500.72px;font-size:16px;font-family:'DejaVu Sans Mono',monospace;transform:scaleX(0.895);transform-origin:100% 50%;color:#444;">-13.37</span>
<span class="t" style="top:768px;right:1387.39px;font-size:16px;font-family:'DejaVu Sans Mono',monospace;transform:scaleX(0.895);transform-origin:100% 50%;color:#444;">-22.31</span>
<span class="t" style="top:793.00px;font-size:17px;left:147.11px;letter-spacing:-0.030px;color:#2e2e2e;-webkit-text-stroke:0.4px #2e2e2e;">Discounts</span>
<svg style="left:126.5px;top:794.4px;" width="13" height="13" viewBox="0 0 13 13"><rect x="0.7" y="0.75" width="10.7" height="10.4" rx="0.9" fill="#fff" stroke="#606060" stroke-width="1.3"/><path d="M3 6H9.1" stroke="#606060" stroke-width="1.4"/></svg>
<span class="t" style="top:795px;right:1954.68px;font-size:16px;font-family:'DejaVu Sans Mono',monospace;transform:scaleX(0.895);transform-origin:100% 50%;color:#2e2e2e;-webkit-text-stroke:0.28px #2e2e2e;">-219.56</span>
<span class="t" style="top:795px;right:1841.19px;font-size:16px;font-family:'DejaVu Sans Mono',monospace;transform:scaleX(0.895);transform-origin:100% 50%;color:#2e2e2e;-webkit-text-stroke:0.28px #2e2e2e;">-216.81</span>
<span class="t" style="top:795px;right:1727.74px;font-size:16px;font-family:'DejaVu Sans Mono',monospace;transform:scaleX(0.895);transform-origin:100% 50%;color:#2e2e2e;-webkit-text-stroke:0.28px #2e2e2e;">-442.51</span>
<span class="t" style="top:795px;right:1614.34px;font-size:16px;font-family:'DejaVu Sans Mono',monospace;transform:scaleX(0.895);transform-origin:100% 50%;color:#2e2e2e;-webkit-text-stroke:0.28px #2e2e2e;">-441.38</span>
<span class="t" style="top:795px;right:1500.59px;font-size:16px;font-family:'DejaVu Sans Mono',monospace;transform:scaleX(0.895);transform-origin:100% 50%;color:#2e2e2e;-webkit-text-stroke:0.28px #2e2e2e;">-163.72</span>
<span class="t" style="top:795px;right:1387.27px;font-size:16px;font-family:'DejaVu Sans Mono',monospace;transform:scaleX(0.895);transform-origin:100% 50%;color:#2e2e2e;-webkit-text-stroke:0.28px #2e2e2e;">-280.43</span>
<span class="t" style="top:819.00px;font-size:17px;left:154.21px;letter-spacing:-0.184px;color:#444;">Pricing A...</span>
<span class="t" style="top:820px;right:1954.69px;font-size:16px;font-family:'DejaVu Sans Mono',monospace;transform:scaleX(0.895);transform-origin:100% 50%;color:#444;">-122.98</span>
<span class="t" style="top:820px;right:1841.23px;font-size:16px;font-family:'DejaVu Sans Mono',monospace;transform:scaleX(0.895);transform-origin:100% 50%;color:#444;">-124.66</span>
<span class="t" style="top:820px;right:1727.74px;font-size:16px;font-family:'DejaVu Sans Mono',monospace;transform:scaleX(0.895);transform-origin:100% 50%;color:#444;">-258.49</span>
<span class="t" style="top:820px;right:1614.29px;font-size:16px;font-family:'DejaVu Sans Mono',monospace;transform:scaleX(0.895);transform-origin:100% 50%;color:#444;">-256.11</span>
<span class="t" style="top:820px;right:1500.84px;font-size:16px;font-family:'DejaVu Sans Mono',monospace;transform:scaleX(0.895);transform-origin:100% 50%;color:#444;">-95.71</span>
<span class="t" style="top:820px;right:1387.14px;font-size:16px;font-family:'DejaVu Sans Mono',monospace;transform:scaleX(0.895);transform-origin:100% 50%;color:#444;">-158.82</span>
<span class="t" style="top:844.00px;font-size:17px;left:154.84px;transform:scaleX(0.9409);transform-origin:0.77px 50%;color:#444;">Sale Allo...</span>
<span class="t" style="top:845px;right:1954.68px;font-size:16px;font-family:'DejaVu Sans Mono',monospace;transform:scaleX(0.895);transform-origin:100% 50%;color:#444;">-31.66</span>
<span class="t" style="top:845px;right:1841.19px;font-size:16px;font-family:'DejaVu Sans Mono',monospace;transform:scaleX(0.895);transform-origin:100% 50%;color:#444;">-30.81</span>
<span class="t" style="top:845px;right:1728.02px;font-size:16px;font-family:'DejaVu Sans Mono',monospace;transform:scaleX(0.895);transform-origin:100% 50%;color:#444;">-62.14</span>
<span class="t" style="top:845px;right:1614.04px;font-size:16px;font-family:'DejaVu Sans Mono',monospace;transform:scaleX(0.895);transform-origin:100% 50%;color:#444;">-62.62</span>
<span class="t" style="top:845px;right:1500.88px;font-size:16px;font-family:'DejaVu Sans Mono',monospace;transform:scaleX(0.895);transform-origin:100% 50%;color:#444;">-22.96</span>
<span class="t" style="top:845px;right:1387.27px;font-size:16px;font-family:'DejaVu Sans Mono',monospace;transform:scaleX(0.895);transform-origin:100% 50%;color:#444;">-39.57</span>
<span class="t" style="top:870.00px;font-size:17px;left:154.84px;transform:scaleX(0.8774);transform-origin:0.77px 50%;color:#444;">Sales Dis...</span>
<span class="t" style="top:871px;right:1954.39px;font-size:16px;font-family:'DejaVu Sans Mono',monospace;transform:scaleX(0.895);transform-origin:100% 50%;color:#444;">-49.12</span>
<span class="t" style="top:871px;right:1841.47px;font-size:16px;font-family:'DejaVu Sans Mono',monospace;transform:scaleX(0.895);transform-origin:100% 50%;color:#444;">-46.84</span>
<span class="t" style="top:871px;right:1727.62px;font-size:16px;font-family:'DejaVu Sans Mono',monospace;transform:scaleX(0.895);transform-origin:100% 50%;color:#444;">-97.97</span>
<span class="t" style="top:871px;right:1614.34px;font-size:16px;font-family:'DejaVu Sans Mono',monospace;transform:scaleX(0.895);transform-origin:100% 50%;color:#444;">-94.78</span>
<span class="t" style="top:871px;right:1500.65px;font-size:16px;font-family:'DejaVu Sans Mono',monospace;transform:scaleX(0.895);transform-origin:100% 50%;color:#444;">-35.25</span>
<span class="t" style="top:871px;right:1387.39px;font-size:16px;font-family:'DejaVu Sans Mono',monospace;transform:scaleX(0.895);transform-origin:100% 50%;color:#444;">-62.21</span>
<span class="t" style="top:895.00px;font-size:17px;left:154.84px;transform:scaleX(0.8873);transform-origin:0.77px 50%;color:#444;">Sales Ma...</span>
<span class="t" style="top:897px;right:1954.68px;font-size:16px;font-family:'DejaVu Sans Mono',monospace;transform:scaleX(0.895);transform-origin:100% 50%;color:#444;">-15.80</span>
<span class="t" style="top:897px;right:1841.23px;font-size:16px;font-family:'DejaVu Sans Mono',monospace;transform:scaleX(0.895);transform-origin:100% 50%;color:#444;">-14.50</span>
<span class="t" style="top:897px;right:1727.49px;font-size:16px;font-family:'DejaVu Sans Mono',monospace;transform:scaleX(0.895);transform-origin:100% 50%;color:#444;">-23.92</span>
<span class="t" style="top:897px;right:1614.17px;font-size:16px;font-family:'DejaVu Sans Mono',monospace;transform:scaleX(0.895);transform-origin:100% 50%;color:#444;">-27.87</span>
<span class="t" style="top:897px;right:1500.88px;font-size:16px;font-family:'DejaVu Sans Mono',monospace;transform:scaleX(0.895);transform-origin:100% 50%;color:#444;">-9.80</span>
<span class="t" style="top:897px;right:1387.27px;font-size:16px;font-family:'DejaVu Sans Mono',monospace;transform:scaleX(0.895);transform-origin:100% 50%;color:#444;">-19.83</span>
<span class="t" style="top:922.00px;font-size:17px;left:133.25px;letter-spacing:-0.194px;color:#2e2e2e;-webkit-text-stroke:0.4px #2e2e2e;">Cost of Go...</span>
<svg style="left:112.5px;top:923.4px;" width="13" height="13" viewBox="0 0 13 13"><rect x="0.7" y="0.75" width="10.7" height="10.4" rx="0.9" fill="#fff" stroke="#606060" stroke-width="1.3"/><path d="M3 6H9.1" stroke="#606060" stroke-width="1.4"/></svg>
<span class="t" style="top:925px;right:1954.52px;font-size:16px;font-family:'DejaVu Sans Mono',monospace;transform:scaleX(0.895);transform-origin:100% 50%;color:#2e2e2e;-webkit-text-stroke:0.28px #2e2e2e;">-1,251.53</span>
<span class="t" style="top:925px;right:1841.07px;font-size:16px;font-family:'DejaVu Sans Mono',monospace;transform:scaleX(0.895);transform-origin:100% 50%;color:#2e2e2e;-webkit-text-stroke:0.28px #2e2e2e;">-1,273.27</span>
<span class="t" style="top:925px;right:1727.78px;font-size:16px;font-family:'DejaVu Sans Mono',monospace;transform:scaleX(0.895);transform-origin:100% 50%;color:#2e2e2e;-webkit-text-stroke:0.28px #2e2e2e;">-2,534.56</span>
<span class="t" style="top:925px;right:1614.57px;font-size:16px;font-family:'DejaVu Sans Mono',monospace;transform:scaleX(0.895);transform-origin:100% 50%;color:#2e2e2e;-webkit-text-stroke:0.28px #2e2e2e;">-2,550.04</span>
<span class="t" style="top:925px;right:1500.72px;font-size:16px;font-family:'DejaVu Sans Mono',monospace;transform:scaleX(0.895);transform-origin:100% 50%;color:#2e2e2e;-webkit-text-stroke:0.28px #2e2e2e;">-933.27</span>
<span class="t" style="top:925px;right:1387.27px;font-size:16px;font-family:'DejaVu Sans Mono',monospace;transform:scaleX(0.895);transform-origin:100% 50%;color:#2e2e2e;-webkit-text-stroke:0.28px #2e2e2e;">-1,619.83</span>
<span class="t" style="top:948.00px;font-size:17px;left:147.11px;transform:scaleX(0.9333);transform-origin:1.39px 50%;color:#2e2e2e;-webkit-text-stroke:0.4px #2e2e2e;">Raw Mate...</span>
<span class="t" style="top:949px;right:1954.64px;font-size:16px;font-family:'DejaVu Sans Mono',monospace;transform:scaleX(0.895);transform-origin:100% 50%;color:#2e2e2e;-webkit-text-stroke:0.28px #2e2e2e;">-784.09</span>
<span class="t" style="top:949px;right:1841.00px;font-size:16px;font-family:'DejaVu Sans Mono',monospace;transform:scaleX(0.895);transform-origin:100% 50%;color:#2e2e2e;-webkit-text-stroke:0.28px #2e2e2e;">-795.35</span>
<span class="t" style="top:949px;right:1728.02px;font-size:16px;font-family:'DejaVu Sans Mono',monospace;transform:scaleX(0.895);transform-origin:100% 50%;color:#2e2e2e;-webkit-text-stroke:0.28px #2e2e2e;">-1,599.04</span>
<span class="t" style="top:949px;right:1614.57px;font-size:16px;font-family:'DejaVu Sans Mono',monospace;transform:scaleX(0.895);transform-origin:100% 50%;color:#2e2e2e;-webkit-text-stroke:0.28px #2e2e2e;">-1,608.44</span>
<span class="t" style="top:949px;right:1500.72px;font-size:16px;font-family:'DejaVu Sans Mono',monospace;transform:scaleX(0.895);transform-origin:100% 50%;color:#2e2e2e;-webkit-text-stroke:0.28px #2e2e2e;">-589.17</span>
<span class="t" style="top:949px;right:1387.43px;font-size:16px;font-family:'DejaVu Sans Mono',monospace;transform:scaleX(0.895);transform-origin:100% 50%;color:#2e2e2e;-webkit-text-stroke:0.28px #2e2e2e;">-1,022.40</span>
<span class="t" style="top:973.00px;font-size:17px;left:147.11px;letter-spacing:-0.030px;color:#2e2e2e;-webkit-text-stroke:0.4px #2e2e2e;">Labor</span>
<span class="t" style="top:974px;right:1954.52px;font-size:16px;font-family:'DejaVu Sans Mono',monospace;transform:scaleX(0.895);transform-origin:100% 50%;color:#2e2e2e;-webkit-text-stroke:0.28px #2e2e2e;">-464.07</span>
<span class="t" style="top:974px;right:1841.07px;font-size:16px;font-family:'DejaVu Sans Mono',monospace;transform:scaleX(0.895);transform-origin:100% 50%;color:#2e2e2e;-webkit-text-stroke:0.28px #2e2e2e;">-474.53</span>
<span class="t" style="top:974px;right:1727.74px;font-size:16px;font-family:'DejaVu Sans Mono',monospace;transform:scaleX(0.895);transform-origin:100% 50%;color:#2e2e2e;-webkit-text-stroke:0.28px #2e2e2e;">-929.01</span>
<span class="t" style="top:974px;right:1614.29px;font-size:16px;font-family:'DejaVu Sans Mono',monospace;transform:scaleX(0.895);transform-origin:100% 50%;color:#2e2e2e;-webkit-text-stroke:0.28px #2e2e2e;">-934.69</span>
<span class="t" style="top:974px;right:1500.88px;font-size:16px;font-family:'DejaVu Sans Mono',monospace;transform:scaleX(0.895);transform-origin:100% 50%;color:#2e2e2e;-webkit-text-stroke:0.28px #2e2e2e;">-341.46</span>
<span class="t" style="top:974px;right:1387.43px;font-size:16px;font-family:'DejaVu Sans Mono',monospace;transform:scaleX(0.895);transform-origin:100% 50%;color:#2e2e2e;-webkit-text-stroke:0.28px #2e2e2e;">-593.40</span>
<span class="t" style="top:999.00px;font-size:17px;left:147.11px;transform:scaleX(0.9331);transform-origin:1.39px 50%;color:#2e2e2e;-webkit-text-stroke:0.4px #2e2e2e;">Purchase ...</span>
<span class="t" style="top:1000px;right:1954.68px;font-size:16px;font-family:'DejaVu Sans Mono',monospace;transform:scaleX(0.895);transform-origin:100% 50%;color:#2e2e2e;-webkit-text-stroke:0.28px #2e2e2e;">-0.06</span>
<span class="t" style="top:1000px;right:1841.07px;font-size:16px;font-family:'DejaVu Sans Mono',monospace;transform:scaleX(0.895);transform-origin:100% 50%;color:#2e2e2e;-webkit-text-stroke:0.28px #2e2e2e;">-0.03</span>
<span class="t" style="top:1000px;right:1727.78px;font-size:16px;font-family:'DejaVu Sans Mono',monospace;transform:scaleX(0.895);transform-origin:100% 50%;color:#2e2e2e;-webkit-text-stroke:0.28px #2e2e2e;">-0.16</span>
<span class="t" style="top:1000px;right:1614.17px;font-size:16px;font-family:'DejaVu Sans Mono',monospace;transform:scaleX(0.895);transform-origin:100% 50%;color:#2e2e2e;-webkit-text-stroke:0.28px #2e2e2e;">-0.23</span>
<span class="t" style="top:1000px;right:1500.84px;font-size:16px;font-family:'DejaVu Sans Mono',monospace;transform:scaleX(0.895);transform-origin:100% 50%;color:#2e2e2e;-webkit-text-stroke:0.28px #2e2e2e;">-0.21</span>
<span class="t" style="top:1000px;right:1387.20px;font-size:16px;font-family:'DejaVu Sans Mono',monospace;transform:scaleX(0.895);transform-origin:100% 50%;color:#2e2e2e;-webkit-text-stroke:0.28px #2e2e2e;">-0.05</span>
<span class="t" style="top:1024.00px;font-size:17px;left:147.20px;letter-spacing:-0.132px;color:#2e2e2e;-webkit-text-stroke:0.4px #2e2e2e;">Other Dir...</span>
<span class="t" style="top:1025px;right:1954.45px;font-size:16px;font-family:'DejaVu Sans Mono',monospace;transform:scaleX(0.895);transform-origin:100% 50%;color:#2e2e2e;-webkit-text-stroke:0.28px #2e2e2e;">-1.15</span>
<span class="t" style="top:1025px;right:1841.07px;font-size:16px;font-family:'DejaVu Sans Mono',monospace;transform:scaleX(0.895);transform-origin:100% 50%;color:#2e2e2e;-webkit-text-stroke:0.28px #2e2e2e;">-1.07</span>
<span class="t" style="top:1025px;right:1727.74px;font-size:16px;font-family:'DejaVu Sans Mono',monospace;transform:scaleX(0.895);transform-origin:100% 50%;color:#2e2e2e;-webkit-text-stroke:0.28px #2e2e2e;">-1.89</span>
<span class="t" style="top:1025px;right:1614.34px;font-size:16px;font-family:'DejaVu Sans Mono',monospace;transform:scaleX(0.895);transform-origin:100% 50%;color:#2e2e2e;-webkit-text-stroke:0.28px #2e2e2e;">-2.18</span>
<span class="t" style="top:1025px;right:1501.12px;font-size:16px;font-family:'DejaVu Sans Mono',monospace;transform:scaleX(0.895);transform-origin:100% 50%;color:#2e2e2e;-webkit-text-stroke:0.28px #2e2e2e;">-0.74</span>
<span class="t" style="top:1025px;right:1387.39px;font-size:16px;font-family:'DejaVu Sans Mono',monospace;transform:scaleX(0.895);transform-origin:100% 50%;color:#2e2e2e;-webkit-text-stroke:0.28px #2e2e2e;">-1.19</span>
<span class="t" style="top:1050.00px;font-size:17px;left:147.11px;letter-spacing:-0.201px;color:#2e2e2e;-webkit-text-stroke:0.4px #2e2e2e;">Freight</span>
<span class="t" style="top:1051px;right:1954.68px;font-size:16px;font-family:'DejaVu Sans Mono',monospace;transform:scaleX(0.895);transform-origin:100% 50%;color:#2e2e2e;-webkit-text-stroke:0.28px #2e2e2e;">-2.16</span>
<span class="t" style="top:1051px;right:1841.19px;font-size:16px;font-family:'DejaVu Sans Mono',monospace;transform:scaleX(0.895);transform-origin:100% 50%;color:#2e2e2e;-webkit-text-stroke:0.28px #2e2e2e;">-2.29</span>
<span class="t" style="top:1051px;right:1727.78px;font-size:16px;font-family:'DejaVu Sans Mono',monospace;transform:scaleX(0.895);transform-origin:100% 50%;color:#2e2e2e;-webkit-text-stroke:0.28px #2e2e2e;">-4.46</span>
<span class="t" style="top:1051px;right:1614.29px;font-size:16px;font-family:'DejaVu Sans Mono',monospace;transform:scaleX(0.895);transform-origin:100% 50%;color:#2e2e2e;-webkit-text-stroke:0.28px #2e2e2e;">-4.51</span>
<span class="t" style="top:1051px;right:1500.84px;font-size:16px;font-family:'DejaVu Sans Mono',monospace;transform:scaleX(0.895);transform-origin:100% 50%;color:#2e2e2e;-webkit-text-stroke:0.28px #2e2e2e;">-1.69</span>
<span class="t" style="top:1051px;right:1387.39px;font-size:16px;font-family:'DejaVu Sans Mono',monospace;transform:scaleX(0.895);transform-origin:100% 50%;color:#2e2e2e;-webkit-text-stroke:0.28px #2e2e2e;">-2.79</span>
<span class="t" style="top:1077.00px;font-size:17px;left:118.70px;letter-spacing:-0.296px;color:#2e2e2e;-webkit-text-stroke:0.4px #2e2e2e;">Operating Ex...</span>
<svg style="left:98.1px;top:1078.4px;" width="13" height="13" viewBox="0 0 13 13"><rect x="0.7" y="0.75" width="10.7" height="10.4" rx="0.9" fill="#fff" stroke="#606060" stroke-width="1.3"/><path d="M3 6H9.1" stroke="#606060" stroke-width="1.4"/></svg>
<span class="t" style="top:1079px;right:1954.68px;font-size:16px;font-family:'DejaVu Sans Mono',monospace;transform:scaleX(0.895);transform-origin:100% 50%;color:#2e2e2e;-webkit-text-stroke:0.28px #2e2e2e;">-665.46</span>
<span class="t" style="top:1079px;right:1841.19px;font-size:16px;font-family:'DejaVu Sans Mono',monospace;transform:scaleX(0.895);transform-origin:100% 50%;color:#2e2e2e;-webkit-text-stroke:0.28px #2e2e2e;">-714.51</span>
<span class="t" style="top:1079px;right:1728.02px;font-size:16px;font-family:'DejaVu Sans Mono',monospace;transform:scaleX(0.895);transform-origin:100% 50%;color:#2e2e2e;-webkit-text-stroke:0.28px #2e2e2e;">-1,495.14</span>
<span class="t" style="top:1079px;right:1614.28px;font-size:16px;font-family:'DejaVu Sans Mono',monospace;transform:scaleX(0.895);transform-origin:100% 50%;color:#2e2e2e;-webkit-text-stroke:0.28px #2e2e2e;">-1,365.59</span>
<span class="t" style="top:1079px;right:1500.65px;font-size:16px;font-family:'DejaVu Sans Mono',monospace;transform:scaleX(0.895);transform-origin:100% 50%;color:#2e2e2e;-webkit-text-stroke:0.28px #2e2e2e;">-519.95</span>
<span class="t" style="top:1079px;right:1387.39px;font-size:16px;font-family:'DejaVu Sans Mono',monospace;transform:scaleX(0.895);transform-origin:100% 50%;color:#2e2e2e;-webkit-text-stroke:0.28px #2e2e2e;">-941.31</span>
<span class="t" style="top:1103.00px;font-size:17px;left:133.04px;transform:scaleX(0.9356);transform-origin:0.77px 50%;color:#2e2e2e;-webkit-text-stroke:0.4px #2e2e2e;">Sales and M...</span>
<svg style="left:112.5px;top:1104.4px;" width="13" height="13" viewBox="0 0 13 13"><rect x="0.7" y="0.75" width="10.7" height="10.4" rx="0.9" fill="#fff" stroke="#606060" stroke-width="1.3"/><path d="M3 6H9.1" stroke="#606060" stroke-width="1.4"/></svg>
<span class="t" style="top:1106px;right:1954.52px;font-size:16px;font-family:'DejaVu Sans Mono',monospace;transform:scaleX(0.895);transform-origin:100% 50%;color:#2e2e2e;-webkit-text-stroke:0.28px #2e2e2e;">-186.13</span>
<span class="t" style="top:1106px;right:1841.00px;font-size:16px;font-family:'DejaVu Sans Mono',monospace;transform:scaleX(0.895);transform-origin:100% 50%;color:#2e2e2e;-webkit-text-stroke:0.28px #2e2e2e;">-240.95</span>
<span class="t" style="top:1106px;right:1727.74px;font-size:16px;font-family:'DejaVu Sans Mono',monospace;transform:scaleX(0.895);transform-origin:100% 50%;color:#2e2e2e;-webkit-text-stroke:0.28px #2e2e2e;">-497.99</span>
<span class="t" style="top:1106px;right:1614.10px;font-size:16px;font-family:'DejaVu Sans Mono',monospace;transform:scaleX(0.895);transform-origin:100% 50%;color:#2e2e2e;-webkit-text-stroke:0.28px #2e2e2e;">-387.75</span>
<span class="t" style="top:1106px;right:1501.12px;font-size:16px;font-family:'DejaVu Sans Mono',monospace;transform:scaleX(0.895);transform-origin:100% 50%;color:#2e2e2e;-webkit-text-stroke:0.28px #2e2e2e;">-164.14</span>
<span class="t" style="top:1106px;right:1387.39px;font-size:16px;font-family:'DejaVu Sans Mono',monospace;transform:scaleX(0.895);transform-origin:100% 50%;color:#2e2e2e;-webkit-text-stroke:0.28px #2e2e2e;">-309.09</span>
<span class="t" style="top:1129.00px;font-size:17px;left:147.11px;letter-spacing:-0.224px;color:#2e2e2e;-webkit-text-stroke:0.4px #2e2e2e;">Marketing...</span>
<span class="t" style="top:1131px;right:1954.64px;font-size:16px;font-family:'DejaVu Sans Mono',monospace;transform:scaleX(0.895);transform-origin:100% 50%;color:#2e2e2e;-webkit-text-stroke:0.28px #2e2e2e;">-107.51</span>
<span class="t" style="top:1131px;right:1841.07px;font-size:16px;font-family:'DejaVu Sans Mono',monospace;transform:scaleX(0.895);transform-origin:100% 50%;color:#2e2e2e;-webkit-text-stroke:0.28px #2e2e2e;">-115.83</span>
<span class="t" style="top:1131px;right:1728.02px;font-size:16px;font-family:'DejaVu Sans Mono',monospace;transform:scaleX(0.895);transform-origin:100% 50%;color:#2e2e2e;-webkit-text-stroke:0.28px #2e2e2e;">-254.74</span>
<span class="t" style="top:1131px;right:1614.33px;font-size:16px;font-family:'DejaVu Sans Mono',monospace;transform:scaleX(0.895);transform-origin:100% 50%;color:#2e2e2e;-webkit-text-stroke:0.28px #2e2e2e;">-234.16</span>
<span class="t" style="top:1131px;right:1500.88px;font-size:16px;font-family:'DejaVu Sans Mono',monospace;transform:scaleX(0.895);transform-origin:100% 50%;color:#2e2e2e;-webkit-text-stroke:0.28px #2e2e2e;">-86.20</span>
<span class="t" style="top:1131px;right:1387.39px;font-size:16px;font-family:'DejaVu Sans Mono',monospace;transform:scaleX(0.895);transform-origin:100% 50%;color:#2e2e2e;-webkit-text-stroke:0.28px #2e2e2e;">-153.91</span>
<span class="t" style="top:1154.00px;font-size:17px;left:147.74px;transform:scaleX(0.9106);transform-origin:0.77px 50%;color:#2e2e2e;-webkit-text-stroke:0.4px #2e2e2e;">Sales Exp...</span>
<span class="t" style="top:1156px;right:1954.64px;font-size:16px;font-family:'DejaVu Sans Mono',monospace;transform:scaleX(0.895);transform-origin:100% 50%;color:#2e2e2e;-webkit-text-stroke:0.28px #2e2e2e;">-78.61</span>
<span class="t" style="top:1156px;right:1841.19px;font-size:16px;font-family:'DejaVu Sans Mono',monospace;transform:scaleX(0.895);transform-origin:100% 50%;color:#2e2e2e;-webkit-text-stroke:0.28px #2e2e2e;">-125.11</span>
<span class="t" style="top:1156px;right:1727.55px;font-size:16px;font-family:'DejaVu Sans Mono',monospace;transform:scaleX(0.895);transform-origin:100% 50%;color:#2e2e2e;-webkit-text-stroke:0.28px #2e2e2e;">-243.25</span>
<span class="t" style="top:1156px;right:1614.34px;font-size:16px;font-family:'DejaVu Sans Mono',monospace;transform:scaleX(0.895);transform-origin:100% 50%;color:#2e2e2e;-webkit-text-stroke:0.28px #2e2e2e;">-153.58</span>
<span class="t" style="top:1156px;right:1500.72px;font-size:16px;font-family:'DejaVu Sans Mono',monospace;transform:scaleX(0.895);transform-origin:100% 50%;color:#2e2e2e;-webkit-text-stroke:0.28px #2e2e2e;">-77.93</span>
<span class="t" style="top:1156px;right:1387.44px;font-size:16px;font-family:'DejaVu Sans Mono',monospace;transform:scaleX(0.895);transform-origin:100% 50%;color:#2e2e2e;-webkit-text-stroke:0.28px #2e2e2e;">-155.18</span>
<span class="t" style="top:1181.00px;font-size:17px;left:132.71px;letter-spacing:-0.241px;color:#2e2e2e;-webkit-text-stroke:0.4px #2e2e2e;">Personnel ...</span>
<svg style="left:112.5px;top:1182.4px;" width="13" height="13" viewBox="0 0 13 13"><rect x="0.7" y="0.75" width="10.7" height="10.4" rx="0.9" fill="#fff" stroke="#606060" stroke-width="1.3"/><path d="M3 6H9.1" stroke="#606060" stroke-width="1.4"/></svg>
<span class="t" style="top:1184px;right:1954.69px;font-size:16px;font-family:'DejaVu Sans Mono',monospace;transform:scaleX(0.895);transform-origin:100% 50%;color:#2e2e2e;-webkit-text-stroke:0.28px #2e2e2e;">-343.38</span>
<span class="t" style="top:1184px;right:1841.07px;font-size:16px;font-family:'DejaVu Sans Mono',monospace;transform:scaleX(0.895);transform-origin:100% 50%;color:#2e2e2e;-webkit-text-stroke:0.28px #2e2e2e;">-340.53</span>
<span class="t" style="top:1184px;right:1727.78px;font-size:16px;font-family:'DejaVu Sans Mono',monospace;transform:scaleX(0.895);transform-origin:100% 50%;color:#2e2e2e;-webkit-text-stroke:0.28px #2e2e2e;">-731.96</span>
<span class="t" style="top:1184px;right:1614.34px;font-size:16px;font-family:'DejaVu Sans Mono',monospace;transform:scaleX(0.895);transform-origin:100% 50%;color:#2e2e2e;-webkit-text-stroke:0.28px #2e2e2e;">-703.28</span>
<span class="t" style="top:1184px;right:1500.72px;font-size:16px;font-family:'DejaVu Sans Mono',monospace;transform:scaleX(0.895);transform-origin:100% 50%;color:#2e2e2e;-webkit-text-stroke:0.28px #2e2e2e;">-248.17</span>
<span class="t" style="top:1184px;right:1387.39px;font-size:16px;font-family:'DejaVu Sans Mono',monospace;transform:scaleX(0.895);transform-origin:100% 50%;color:#2e2e2e;-webkit-text-stroke:0.28px #2e2e2e;">-460.91</span>
<span class="t" style="top:1207.00px;font-size:17px;left:147.44px;transform:scaleX(0.9260);transform-origin:0.77px 50%;color:#2e2e2e;-webkit-text-stroke:0.4px #2e2e2e;">Salaries</span>
<span class="t" style="top:1208px;right:1954.64px;font-size:16px;font-family:'DejaVu Sans Mono',monospace;transform:scaleX(0.895);transform-origin:100% 50%;color:#2e2e2e;-webkit-text-stroke:0.28px #2e2e2e;">-153.99</span>
<span class="t" style="top:1208px;right:1841.47px;font-size:16px;font-family:'DejaVu Sans Mono',monospace;transform:scaleX(0.895);transform-origin:100% 50%;color:#2e2e2e;-webkit-text-stroke:0.28px #2e2e2e;">-161.64</span>
<span class="t" style="top:1208px;right:1727.55px;font-size:16px;font-family:'DejaVu Sans Mono',monospace;transform:scaleX(0.895);transform-origin:100% 50%;color:#2e2e2e;-webkit-text-stroke:0.28px #2e2e2e;">-326.25</span>
<span class="t" style="top:1208px;right:1614.34px;font-size:16px;font-family:'DejaVu Sans Mono',monospace;transform:scaleX(0.895);transform-origin:100% 50%;color:#2e2e2e;-webkit-text-stroke:0.28px #2e2e2e;">-318.18</span>
<span class="t" style="top:1208px;right:1500.72px;font-size:16px;font-family:'DejaVu Sans Mono',monospace;transform:scaleX(0.895);transform-origin:100% 50%;color:#2e2e2e;-webkit-text-stroke:0.28px #2e2e2e;">-116.83</span>
<span class="t" style="top:1208px;right:1387.27px;font-size:16px;font-family:'DejaVu Sans Mono',monospace;transform:scaleX(0.895);transform-origin:100% 50%;color:#2e2e2e;-webkit-text-stroke:0.28px #2e2e2e;">-205.73</span>
<span class="t" style="top:1232.00px;font-size:17px;left:148.13px;transform:scaleX(0.8857);transform-origin:0.07px 50%;color:#2e2e2e;-webkit-text-stroke:0.4px #2e2e2e;">Wages</span>
<span class="t" style="top:1234px;right:1954.45px;font-size:16px;font-family:'DejaVu Sans Mono',monospace;transform:scaleX(0.895);transform-origin:100% 50%;color:#2e2e2e;-webkit-text-stroke:0.28px #2e2e2e;">-92.15</span>
<span class="t" style="top:1234px;right:1841.00px;font-size:16px;font-family:'DejaVu Sans Mono',monospace;transform:scaleX(0.895);transform-origin:100% 50%;color:#2e2e2e;-webkit-text-stroke:0.28px #2e2e2e;">-95.65</span>
<span class="t" style="top:1234px;right:1727.49px;font-size:16px;font-family:'DejaVu Sans Mono',monospace;transform:scaleX(0.895);transform-origin:100% 50%;color:#2e2e2e;-webkit-text-stroke:0.28px #2e2e2e;">-209.62</span>
<span class="t" style="top:1234px;right:1614.33px;font-size:16px;font-family:'DejaVu Sans Mono',monospace;transform:scaleX(0.895);transform-origin:100% 50%;color:#2e2e2e;-webkit-text-stroke:0.28px #2e2e2e;">-184.76</span>
<span class="t" style="top:1234px;right:1500.84px;font-size:16px;font-family:'DejaVu Sans Mono',monospace;transform:scaleX(0.895);transform-origin:100% 50%;color:#2e2e2e;-webkit-text-stroke:0.28px #2e2e2e;">-72.51</span>
<span class="t" style="top:1234px;right:1387.44px;font-size:16px;font-family:'DejaVu Sans Mono',monospace;transform:scaleX(0.895);transform-origin:100% 50%;color:#2e2e2e;-webkit-text-stroke:0.28px #2e2e2e;">-125.38</span>
<span class="t" style="top:1258.00px;font-size:17px;left:147.11px;letter-spacing:-0.197px;color:#2e2e2e;-webkit-text-stroke:0.4px #2e2e2e;">Bonus</span>
<span class="t" style="top:1259px;right:1954.45px;font-size:16px;font-family:'DejaVu Sans Mono',monospace;transform:scaleX(0.895);transform-origin:100% 50%;color:#2e2e2e;-webkit-text-stroke:0.28px #2e2e2e;">-25.85</span>
<span class="t" style="top:1259px;right:1841.24px;font-size:16px;font-family:'DejaVu Sans Mono',monospace;transform:scaleX(0.895);transform-origin:100% 50%;color:#2e2e2e;-webkit-text-stroke:0.28px #2e2e2e;">-27.48</span>
<span class="t" style="top:1259px;right:1727.79px;font-size:16px;font-family:'DejaVu Sans Mono',monospace;transform:scaleX(0.895);transform-origin:100% 50%;color:#2e2e2e;-webkit-text-stroke:0.28px #2e2e2e;">-55.48</span>
<span class="t" style="top:1259px;right:1614.17px;font-size:16px;font-family:'DejaVu Sans Mono',monospace;transform:scaleX(0.895);transform-origin:100% 50%;color:#2e2e2e;-webkit-text-stroke:0.28px #2e2e2e;">-54.73</span>
<span class="t" style="top:1259px;right:1500.84px;font-size:16px;font-family:'DejaVu Sans Mono',monospace;transform:scaleX(0.895);transform-origin:100% 50%;color:#2e2e2e;-webkit-text-stroke:0.28px #2e2e2e;">-20.71</span>
<span class="t" style="top:1259px;right:1387.27px;font-size:16px;font-family:'DejaVu Sans Mono',monospace;transform:scaleX(0.895);transform-origin:100% 50%;color:#2e2e2e;-webkit-text-stroke:0.28px #2e2e2e;">-35.97</span>
<span class="t" style="top:1283.00px;font-size:17px;left:147.11px;letter-spacing:-0.174px;color:#2e2e2e;-webkit-text-stroke:0.4px #2e2e2e;">Benefits</span>
<span class="t" style="top:1285px;right:1954.52px;font-size:16px;font-family:'DejaVu Sans Mono',monospace;transform:scaleX(0.895);transform-origin:100% 50%;color:#2e2e2e;-webkit-text-stroke:0.28px #2e2e2e;">-11.27</span>
<span class="t" style="top:1285px;right:1841.23px;font-size:16px;font-family:'DejaVu Sans Mono',monospace;transform:scaleX(0.895);transform-origin:100% 50%;color:#2e2e2e;-webkit-text-stroke:0.28px #2e2e2e;">-11.10</span>
<span class="t" style="top:1285px;right:1727.62px;font-size:16px;font-family:'DejaVu Sans Mono',monospace;transform:scaleX(0.895);transform-origin:100% 50%;color:#2e2e2e;-webkit-text-stroke:0.28px #2e2e2e;">-20.87</span>
<span class="t" style="top:1285px;right:1614.34px;font-size:16px;font-family:'DejaVu Sans Mono',monospace;transform:scaleX(0.895);transform-origin:100% 50%;color:#2e2e2e;-webkit-text-stroke:0.28px #2e2e2e;">-21.88</span>
<span class="t" style="top:1285px;right:1500.72px;font-size:16px;font-family:'DejaVu Sans Mono',monospace;transform:scaleX(0.895);transform-origin:100% 50%;color:#2e2e2e;-webkit-text-stroke:0.28px #2e2e2e;">-8.13</span>
<span class="t" style="top:1285px;right:1387.67px;font-size:16px;font-family:'DejaVu Sans Mono',monospace;transform:scaleX(0.895);transform-origin:100% 50%;color:#2e2e2e;-webkit-text-stroke:0.28px #2e2e2e;">-14.54</span>
<span class="t" style="top:1309.00px;font-size:17px;left:147.83px;letter-spacing:-0.090px;color:#2e2e2e;-webkit-text-stroke:0.4px #2e2e2e;">Training</span>
<span class="t" style="top:1310px;right:1954.92px;font-size:16px;font-family:'DejaVu Sans Mono',monospace;transform:scaleX(0.895);transform-origin:100% 50%;color:#2e2e2e;-webkit-text-stroke:0.28px #2e2e2e;">-18.34</span>
<span class="t" style="top:1310px;right:1841.07px;font-size:16px;font-family:'DejaVu Sans Mono',monospace;transform:scaleX(0.895);transform-origin:100% 50%;color:#2e2e2e;-webkit-text-stroke:0.28px #2e2e2e;">-13.23</span>
<span class="t" style="top:1310px;right:1727.55px;font-size:16px;font-family:'DejaVu Sans Mono',monospace;transform:scaleX(0.895);transform-origin:100% 50%;color:#2e2e2e;-webkit-text-stroke:0.28px #2e2e2e;">-36.05</span>
<span class="t" style="top:1310px;right:1614.57px;font-size:16px;font-family:'DejaVu Sans Mono',monospace;transform:scaleX(0.895);transform-origin:100% 50%;color:#2e2e2e;-webkit-text-stroke:0.28px #2e2e2e;">-37.94</span>
<span class="t" style="top:1310px;right:1501.12px;font-size:16px;font-family:'DejaVu Sans Mono',monospace;transform:scaleX(0.895);transform-origin:100% 50%;color:#2e2e2e;-webkit-text-stroke:0.28px #2e2e2e;">-8.54</span>
<span class="t" style="top:1310px;right:1387.43px;font-size:16px;font-family:'DejaVu Sans Mono',monospace;transform:scaleX(0.895);transform-origin:100% 50%;color:#2e2e2e;-webkit-text-stroke:0.28px #2e2e2e;">-24.26</span>
<span class="t" style="top:1334.00px;font-size:17px;left:146.81px;letter-spacing:0.050px;color:#2e2e2e;-webkit-text-stroke:0.4px #2e2e2e;">Recruiting</span>
<span class="t" style="top:1336px;right:1954.52px;font-size:16px;font-family:'DejaVu Sans Mono',monospace;transform:scaleX(0.895);transform-origin:100% 50%;color:#2e2e2e;-webkit-text-stroke:0.28px #2e2e2e;">-15.43</span>
<span class="t" style="top:1336px;right:1841.00px;font-size:16px;font-family:'DejaVu Sans Mono',monospace;transform:scaleX(0.895);transform-origin:100% 50%;color:#2e2e2e;-webkit-text-stroke:0.28px #2e2e2e;">-11.05</span>
<span class="t" style="top:1336px;right:1727.79px;font-size:16px;font-family:'DejaVu Sans Mono',monospace;transform:scaleX(0.895);transform-origin:100% 50%;color:#2e2e2e;-webkit-text-stroke:0.28px #2e2e2e;">-29.88</span>
<span class="t" style="top:1336px;right:1614.33px;font-size:16px;font-family:'DejaVu Sans Mono',monospace;transform:scaleX(0.895);transform-origin:100% 50%;color:#2e2e2e;-webkit-text-stroke:0.28px #2e2e2e;">-31.76</span>
<span class="t" style="top:1336px;right:1500.88px;font-size:16px;font-family:'DejaVu Sans Mono',monospace;transform:scaleX(0.895);transform-origin:100% 50%;color:#2e2e2e;-webkit-text-stroke:0.28px #2e2e2e;">-7.16</span>
<span class="t" style="top:1336px;right:1387.27px;font-size:16px;font-family:'DejaVu Sans Mono',monospace;transform:scaleX(0.895);transform-origin:100% 50%;color:#2e2e2e;-webkit-text-stroke:0.28px #2e2e2e;">-20.03</span>
<span class="t" style="top:1360.00px;font-size:17px;left:147.11px;letter-spacing:0.167px;color:#2e2e2e;-webkit-text-stroke:0.4px #2e2e2e;">Equipment</span>
<span class="t" style="top:1361px;right:1954.68px;font-size:16px;font-family:'DejaVu Sans Mono',monospace;transform:scaleX(0.895);transform-origin:100% 50%;color:#2e2e2e;-webkit-text-stroke:0.28px #2e2e2e;">-11.50</span>
<span class="t" style="top:1361px;right:1841.07px;font-size:16px;font-family:'DejaVu Sans Mono',monospace;transform:scaleX(0.895);transform-origin:100% 50%;color:#2e2e2e;-webkit-text-stroke:0.28px #2e2e2e;">-8.17</span>
<span class="t" style="top:1361px;right:1727.74px;font-size:16px;font-family:'DejaVu Sans Mono',monospace;transform:scaleX(0.895);transform-origin:100% 50%;color:#2e2e2e;-webkit-text-stroke:0.28px #2e2e2e;">-22.49</span>
<span class="t" style="top:1361px;right:1614.29px;font-size:16px;font-family:'DejaVu Sans Mono',monospace;transform:scaleX(0.895);transform-origin:100% 50%;color:#2e2e2e;-webkit-text-stroke:0.28px #2e2e2e;">-23.59</span>
<span class="t" style="top:1361px;right:1501.12px;font-size:16px;font-family:'DejaVu Sans Mono',monospace;transform:scaleX(0.895);transform-origin:100% 50%;color:#2e2e2e;-webkit-text-stroke:0.28px #2e2e2e;">-5.34</span>
<span class="t" style="top:1361px;right:1387.20px;font-size:16px;font-family:'DejaVu Sans Mono',monospace;transform:scaleX(0.895);transform-origin:100% 50%;color:#2e2e2e;-webkit-text-stroke:0.28px #2e2e2e;">-15.15</span></div></div>
<div style="left:2270.2px;top:523px;width:22px;height:890px;background:#f5f5f5;border-radius:11px 11px 0 0;"></div>
<svg style="left:2270.2px;top:523px;" width="22" height="890" viewBox="0 0 22 890"><path d="M6.200 14.900L10.500 7.500a0.600 0.600 0 0 1 1 0L15.800 14.900a0.800 0.800 0 0 1-.7 1.200H6.900a0.800 0.800 0 0 1-.7-1.200Z" fill="#6e6e6e"/><rect x="5.600" y="800.800" width="10.200" height="42.600" rx="5.100" fill="#707070"/><path d="M5.400 881.600L10.300 889.500a0.800 0.800 0 0 0 1.400 0L16.600 881.600a0.800 0.800 0 0 0-.7-1.200H6.100a0.800 0.800 0 0 0-.7 1.200Z" fill="#6e6e6e"/></svg>
</body></html>
